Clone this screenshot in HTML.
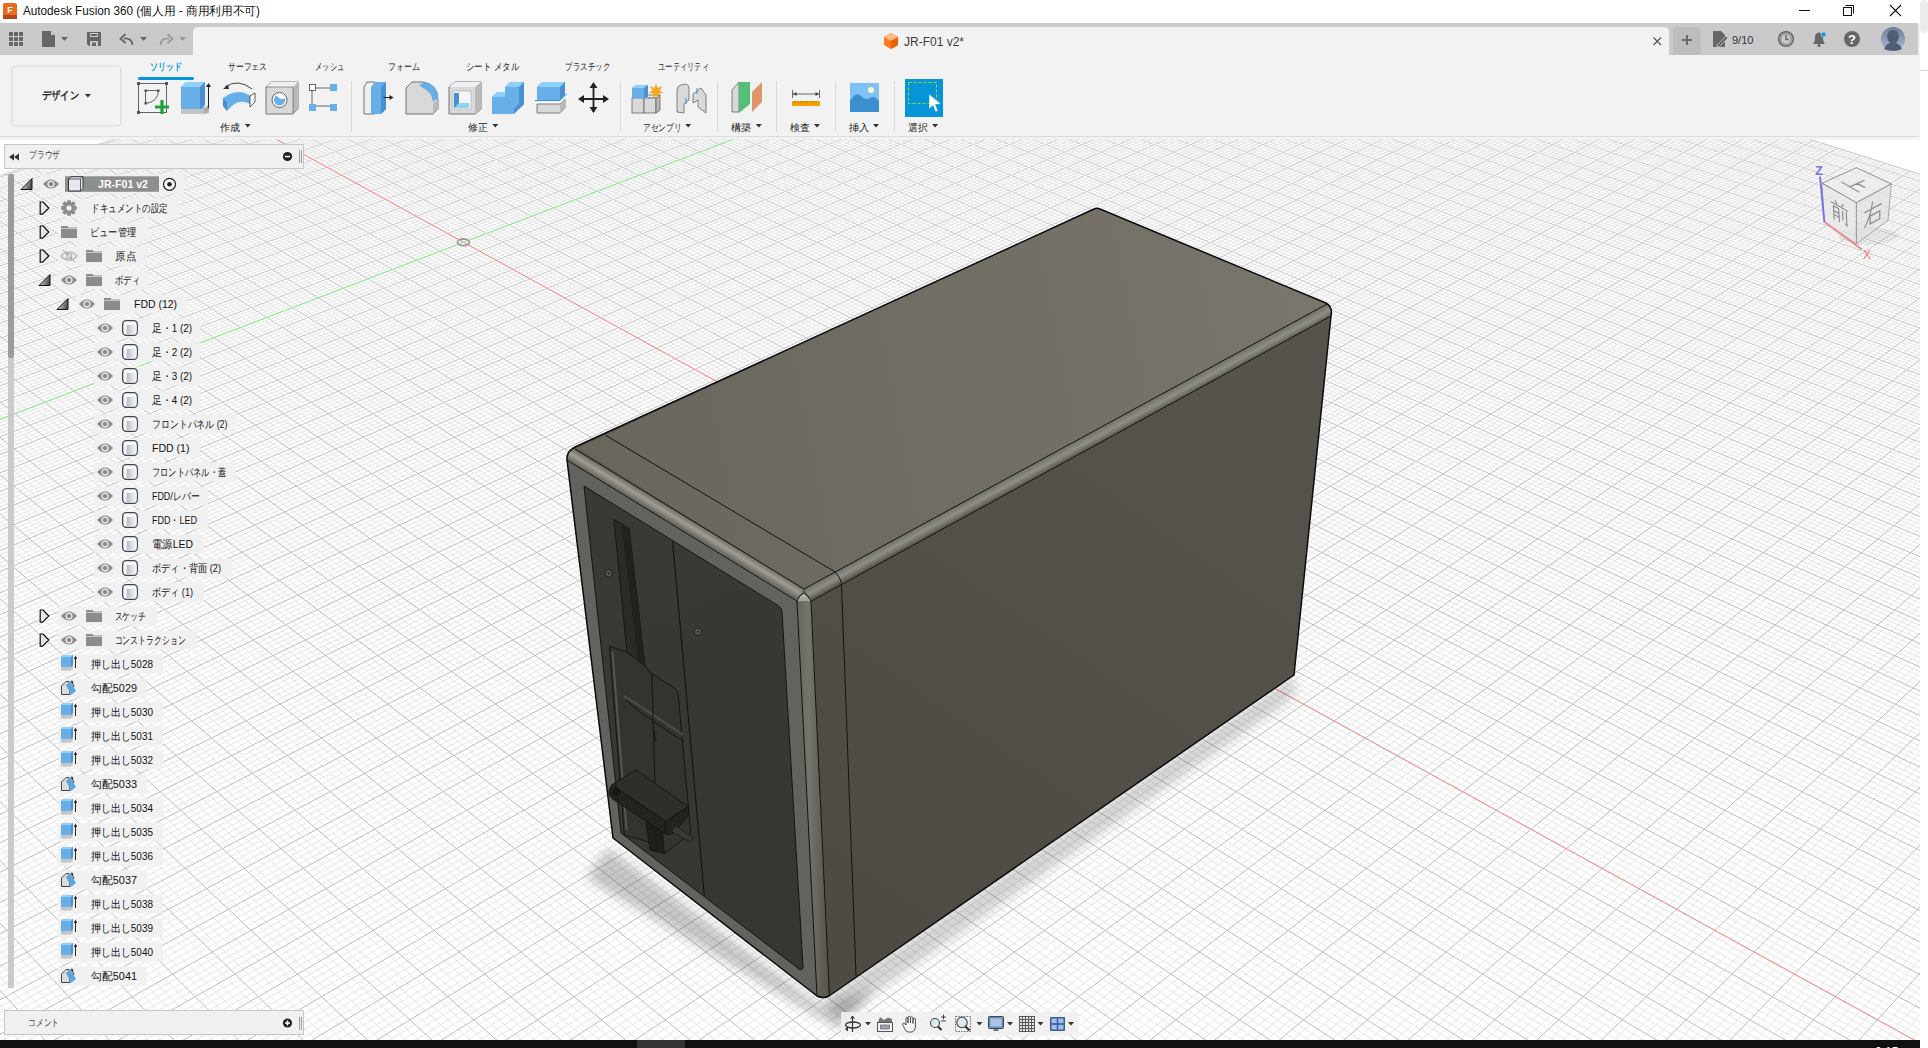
<!DOCTYPE html>
<html><head><meta charset="utf-8"><style>
*{box-sizing:border-box}
html,body{margin:0;padding:0;width:1928px;height:1048px;overflow:hidden;background:#fff;font-family:"Liberation Sans",sans-serif;color:#222}
.a{position:absolute}
svg text{font-family:"Liberation Sans",sans-serif}
</style></head><body>
<svg class="a" style="left:0;top:0" width="1928" height="1048" viewBox="0 0 1928 1048">
<defs><clipPath id="vp"><rect x="0" y="137" width="1920" height="903"/></clipPath></defs>
<rect x="0" y="137" width="1920" height="903" fill="#fff"/>
<g clip-path="url(#vp)">
<g>
<path d="M-1403.0 619.2L779.8 9383.2M-1393.5 616.2L845.4 9383.2M-1384.0 613.2L911.1 9383.3M-1374.6 610.2L976.7 9383.4M-1355.8 604.3L1107.9 9383.5M-1346.5 601.3L1173.6 9383.6M-1337.2 598.4L1239.2 9383.7M-1327.9 595.5L1304.8 9383.8M-1309.5 589.6L1436.1 9383.9M-1300.4 586.7L1501.7 9384.0M-1291.2 583.9L1567.3 9384.1M-1282.2 581.0L1632.9 9384.1M-1264.1 575.3L1764.2 9384.3M-1255.1 572.4L1829.8 9384.4M-1246.1 569.6L1895.4 9384.4M-1237.2 566.8L1961.1 9384.5M-1219.4 561.1L2092.3 9384.7M-1210.6 558.4L2157.9 9384.7M-1201.8 555.6L2223.6 9384.8M-1193.0 552.8L2289.2 9384.9M-1175.6 547.3L2420.4 9385.0M-1166.9 544.5L2486.1 9385.1M-1158.3 541.8L2551.7 9385.2M-1149.7 539.1L2617.3 9385.3M-1132.5 533.7L2748.6 9385.4M-1124.0 531.0L2780.8 9310.4M-1115.5 528.3L2791.7 9190.2M-1107.0 525.6L2802.4 9072.8M-1090.2 520.3L2822.9 8845.9M-1081.8 517.6L2832.9 8736.3M-1073.5 515.0L2842.6 8629.0M-1065.2 512.3L2852.2 8524.1M-1048.6 507.1L2870.6 8321.0M-1040.4 504.5L2879.5 8222.7M-1032.2 501.9L2888.3 8126.4M-1024.0 499.3L2896.8 8032.1M-1007.7 494.2L2913.4 7849.3M-999.7 491.6L2921.5 7760.6M-991.6 489.1L2929.3 7673.7M-983.6 486.5L2937.1 7588.5M-967.6 481.5L2952.1 7423.0M-959.6 479.0L2959.4 7342.6M-951.7 476.4L2966.6 7263.8M-943.8 473.9L2973.6 7186.4M-928.1 469.0L2987.2 7035.9M-920.2 466.5L2993.9 6962.7M-912.5 464.0L3000.4 6890.8M-904.7 461.6L3006.8 6820.2M-889.2 456.7L3019.3 6682.8M-881.5 454.3L3025.4 6615.9M-873.9 451.8L3031.3 6550.1M-866.2 449.4L3037.2 6485.4M-851.0 444.6L3048.6 6359.4M-843.5 442.2L3054.2 6298.0M-835.9 439.8L3059.7 6237.6M-828.4 437.4L3065.1 6178.1M-813.5 432.7L3075.6 6062.2M-806.0 430.4L3080.8 6005.6M-798.6 428.0L3085.8 5949.9M-791.2 425.7L3090.8 5895.1M-776.5 421.0L3100.5 5788.0M-769.2 418.7L3105.3 5735.7M-761.9 416.4L3109.9 5684.2M-754.6 414.1L3114.5 5633.5M-740.2 409.5L3123.5 5534.3M-733.0 407.2L3127.9 5485.8M-725.8 405.0L3132.3 5438.1M-718.6 402.7L3136.6 5391.0M-704.4 398.2L3144.9 5298.9M-697.3 396.0L3149.0 5253.8M-690.2 393.7L3153.0 5209.4M-683.2 391.5L3157.0 5165.6M-669.2 387.1L3164.8 5079.9M-662.2 384.9L3168.6 5037.9M-655.3 382.7L3172.4 4996.5M-648.3 380.5L3176.1 4955.6M-634.5 376.1L3183.3 4875.5M-627.7 373.9L3186.9 4836.3M-620.8 371.8L3190.4 4797.6M-614.0 369.6L3193.9 4759.4M-600.4 365.3L3200.7 4684.5M-593.7 363.2L3204.0 4647.8M-586.9 361.1L3207.3 4611.5M-580.2 358.9L3210.6 4575.7M-566.9 354.7L3216.9 4505.5M-560.2 352.6L3220.1 4471.1M-553.6 350.5L3223.1 4437.0M-547.0 348.4L3226.2 4403.4M-533.8 344.2L3232.2 4337.4M-527.3 342.2L3235.1 4305.1M-520.7 340.1L3238.0 4273.1M-514.2 338.1L3240.9 4241.4M-501.3 334.0L3246.5 4179.3M-494.8 331.9L3249.3 4148.8M-488.4 329.9L3252.0 4118.7M-482.0 327.8L3254.7 4088.9M-469.2 323.8L3260.1 4030.3M-462.8 321.8L3262.7 4001.5M-456.5 319.8L3265.3 3973.1M-450.2 317.8L3267.8 3944.9M-437.6 313.8L3272.8 3889.6M-431.4 311.8L3275.3 3862.4M-425.1 309.9L3277.7 3835.5M-418.9 307.9L3280.2 3808.9M-406.5 304.0L3284.9 3756.6M-400.4 302.0L3287.2 3730.9M-394.2 300.1L3289.6 3705.4M-388.1 298.2L3291.8 3680.2M-375.9 294.3L3296.3 3630.6M-369.8 292.4L3298.6 3606.2M-363.8 290.5L3300.7 3582.1M-357.7 288.5L3302.9 3558.2M-345.7 284.7L3307.2 3511.1M-339.7 282.9L3309.3 3488.0M-333.8 281.0L3311.4 3465.1M-327.8 279.1L3313.4 3442.4M-316.0 275.3L3317.5 3397.7M-310.1 273.5L3319.5 3375.7M-304.2 271.6L3321.5 3353.9M-298.3 269.8L3323.4 3332.3M-286.7 266.1L3327.3 3289.8M-280.8 264.2L3329.2 3268.8M-275.1 262.4L3331.1 3248.1M-269.3 260.6L3332.9 3227.5M-257.8 256.9L3336.6 3187.0M-252.0 255.1L3338.4 3167.1M-246.3 253.3L3340.2 3147.3M-240.6 251.5L3342.0 3127.7M-229.3 247.9L3345.5 3089.1M-223.7 246.1L3347.2 3070.1M-218.0 244.4L3348.9 3051.2M-212.4 242.6L3350.6 3032.5M-201.2 239.0L3354.0 2995.6M-195.7 237.3L3355.6 2977.5M-190.1 235.5L3357.3 2959.4M-184.6 233.8L3358.9 2941.6M-173.6 230.3L3362.1 2906.4M-168.1 228.5L3363.7 2889.0M-162.6 226.8L3365.2 2871.8M-157.1 225.1L3366.8 2854.7M-146.3 221.7L3369.8 2821.0M-140.9 219.9L3371.3 2804.4M-135.5 218.2L3372.8 2787.9M-130.1 216.5L3374.3 2771.5M-119.4 213.1L3377.2 2739.3M-114.0 211.5L3378.7 2723.3M-108.7 209.8L3380.1 2707.5M-103.4 208.1L3381.5 2691.9M-92.8 204.8L3384.4 2661.0M-87.6 203.1L3385.7 2645.7M-82.3 201.4L3387.1 2630.6M-77.1 199.8L3388.5 2615.5M-66.7 196.5L3391.2 2585.9M-61.5 194.8L3392.5 2571.2M-56.3 193.2L3393.8 2556.7M-51.1 191.6L3395.1 2542.3M-40.9 188.3L3397.7 2513.8M-35.7 186.7L3399.0 2499.7M-30.6 185.1L3400.3 2485.8M-25.5 183.5L3401.5 2471.9M-15.4 180.3L3404.0 2444.6M-10.4 178.7L3405.2 2431.0M-5.3 177.1L3406.4 2417.6M-0.3 175.5L3407.7 2404.3M9.7 172.3L3410.0 2378.0M14.7 170.7L3411.2 2365.0M19.7 169.2L3412.4 2352.1M24.6 167.6L3413.6 2339.3M34.5 164.5L3415.9 2314.0M39.4 162.9L3417.0 2301.5M44.3 161.4L3418.1 2289.0M49.2 159.8L3419.2 2276.7M58.9 156.7L3421.4 2252.3M63.8 155.2L3422.5 2240.3M68.6 153.7L3423.6 2228.3M73.5 152.1L3424.7 2216.4M83.1 149.1L3426.8 2192.9M87.9 147.6L3427.9 2181.3M92.6 146.1L3428.9 2169.8M97.4 144.6L3430.0 2158.3M106.9 141.6L3432.0 2135.7M111.6 140.1L3433.1 2124.4M116.3 138.6L3434.1 2113.3M121.0 137.1L3435.1 2102.3M130.4 134.1L3437.1 2080.4M135.1 132.7L3438.0 2069.6M139.7 131.2L3439.0 2058.8M144.3 129.7L3440.0 2048.2M153.6 126.8L3441.9 2027.1M158.2 125.3L3442.8 2016.6M162.8 123.9L3443.8 2006.2M167.4 122.4L3444.7 1995.9M176.5 119.5L3446.6 1975.5M181.0 118.1L3447.5 1965.4M185.6 116.7L3448.4 1955.4M190.1 115.2L3449.3 1945.5M199.1 112.4L3451.1 1925.7M203.6 111.0L3452.0 1916.0M208.1 109.6L3452.9 1906.3M212.5 108.1L3453.7 1896.7M221.4 105.3L3455.5 1877.6M225.8 103.9L3456.3 1868.1M230.3 102.5L3457.2 1858.8M234.7 101.1L3458.0 1849.4M243.5 98.4L3459.7 1831.0M247.8 97.0L3460.5 1821.8M252.2 95.6L3461.3 1812.8M256.6 94.2L3462.2 1803.7M265.2 91.5L3463.8 1785.9M269.5 90.1L3464.6 1777.0M273.9 88.7L3465.4 1768.2M278.2 87.4L3466.2 1759.5M286.7 84.7L3467.8 1742.2M291.0 83.3L3468.5 1733.6M295.2 82.0L3469.3 1725.1M299.5 80.6L3470.1 1716.6M307.9 78.0L3471.6 1699.8M312.2 76.6L3472.4 1691.5M316.4 75.3L3473.1 1683.2M320.6 74.0L3473.8 1675.0M328.9 71.3L3475.3 1658.8M333.1 70.0L3476.1 1650.7M337.2 68.7L3476.8 1642.7M341.4 67.4L3477.5 1634.7M349.6 64.8L3478.9 1618.9M353.7 63.5L3479.7 1611.1M357.8 62.2L3480.4 1603.3M361.9 60.9L3481.1 1595.6M370.1 58.3L3482.5 1580.3M374.1 57.0L3483.1 1572.7M378.2 55.7L3483.8 1565.1M382.2 54.5L3484.5 1557.6M390.3 51.9L3485.9 1542.7M394.3 50.6L3486.5 1535.4M398.3 49.4L3487.2 1528.0M402.3 48.1L3487.9 1520.7M410.3 45.6L3489.2 1506.3M414.2 44.3L3489.8 1499.1M418.2 43.1L3490.5 1492.0M422.1 41.8L3491.1 1484.9M430.0 39.4L3492.4 1470.9M433.9 38.1L3493.0 1463.9M437.8 36.9L3493.6 1457.0M441.7 35.6L3494.3 1450.1M449.5 33.2L3495.5 1436.4M453.3 32.0L3496.1 1429.6M457.2 30.7L3496.7 1422.9M461.1 29.5L3497.3 1416.2M468.7 27.1L3498.5 1402.9M472.6 25.9L3499.1 1396.3M476.4 24.7L3499.7 1389.8M480.2 23.5L3500.3 1383.3M487.8 21.1L3501.5 1370.3M491.6 19.9L3502.1 1363.9M495.3 18.7L3502.7 1357.6M499.1 17.5L3503.2 1351.2M506.6 15.1L3504.4 1338.6M510.3 13.9L3505.0 1332.4M514.1 12.8L3505.5 1326.2M517.8 11.6L3506.1 1320.0M525.2 9.2L3507.2 1307.8M528.9 8.1L3507.7 1301.7M532.6 6.9L3508.3 1295.6M536.3 5.7L3508.8 1289.6M543.6 3.4L3509.9 1277.7M547.2 2.3L3510.5 1271.8M550.9 1.1L3511.0 1265.9M554.5 -0.0L3511.5 1260.0M561.8 -2.3L3512.6 1248.4M565.4 -3.5L3513.1 1242.6M569.0 -4.6L3513.6 1236.9M572.6 -5.8L3514.1 1231.2M579.7 -8.0L3515.2 1219.8M583.3 -9.1L3515.7 1214.2M586.9 -10.3L3516.2 1208.6M590.4 -11.4L3516.7 1203.1M597.5 -13.6L3517.7 1192.0M601.0 -14.8L3518.2 1186.5M604.5 -15.9L3518.7 1181.1M608.1 -17.0L3519.2 1175.6M615.1 -19.2L3520.2 1164.9M618.5 -20.3L3520.6 1159.5M622.0 -21.4L3521.1 1154.2M625.5 -22.5L3521.6 1148.9M632.4 -24.7L3522.6 1138.4M635.9 -25.8L3523.0 1133.2M639.3 -26.9L3523.5 1128.0M642.8 -28.0L3524.0 1122.8M649.6 -30.1L3524.9 1112.5M653.0 -31.2L3525.4 1107.4M656.4 -32.3L3525.8 1102.4M659.8 -33.4L3526.3 1097.3M666.6 -35.5L3527.2 1087.3M670.0 -36.6L3527.6 1082.3M673.3 -37.6L3528.1 1077.4M676.7 -38.7L3528.5 1072.5M683.4 -40.8L3529.4 1062.7M686.7 -41.9L3529.9 1057.8M690.0 -42.9L3530.3 1053.0M693.4 -44.0L3530.7 1048.2M700.0 -46.1L3531.6 1038.6M703.3 -47.1L3532.0 1033.9M706.6 -48.1L3532.5 1029.1M709.9 -49.2L3532.9 1024.4M716.4 -51.3L3533.8 1015.1M719.7 -52.3L3534.2 1010.5M722.9 -53.3L3534.6 1005.9M726.2 -54.4L3535.0 1001.3M732.7 -56.4L3535.8 992.1M735.9 -57.4L3536.2 987.6M739.1 -58.4L3536.7 983.1M742.3 -59.5L3537.1 978.6M748.8 -61.5L3537.9 969.7M752.0 -62.5L3538.3 965.3M755.1 -63.5L3538.7 960.9M758.3 -64.5L3539.1 956.5M764.7 -66.5L3539.9 947.7M767.8 -67.5L3540.3 943.4M771.0 -68.5L3540.6 939.1M774.1 -69.5L3541.0 934.8M780.4 -71.5L3541.8 926.3M783.5 -72.5L3542.2 922.0M786.6 -73.5L3542.6 917.8M789.8 -74.5L3543.0 913.6M796.0 -76.4L3543.7 905.3M799.1 -77.4L3544.1 901.1M802.2 -78.4L3544.5 897.0M805.2 -79.4L3544.8 892.9M811.4 -81.3L3545.6 884.7M814.4 -82.3L3546.0 880.7M817.5 -83.2L3546.3 876.6M820.5 -84.2L3546.7 872.6M826.6 -86.1L3547.4 864.6M829.6 -87.1L3547.8 860.7M832.7 -88.0L3548.1 856.7M835.7 -89.0L3548.5 852.8M841.7 -90.9L3549.2 845.0M844.7 -91.8L3549.5 841.1M847.7 -92.8L3549.9 837.2M850.7 -93.7L3550.2 833.3M856.6 -95.6L3550.9 825.7M859.6 -96.6L3551.3 821.9M862.6 -97.5L3551.6 818.1M865.5 -98.4L3552.0 814.3M871.4 -100.3L3552.7 806.8M874.3 -101.2L3553.0 803.1M877.3 -102.1L3553.3 799.4M880.2 -103.1L3553.7 795.7M886.0 -104.9L3554.3 788.3M888.9 -105.8L3554.7 784.7M891.8 -106.8L3555.0 781.0M894.7 -107.7L3555.3 777.4M900.5 -109.5L3556.0 770.2M903.4 -110.4L3556.3 766.6M906.2 -111.3L3556.6 763.1M909.1 -112.2L3557.0 759.5M914.8 -114.0L3557.6 752.5M917.7 -114.9L3557.9 749.0M920.5 -115.8L3558.2 745.5M923.4 -116.7L3558.5 742.0M929.0 -118.5L3559.2 735.1M931.8 -119.4L3559.5 731.6M934.6 -120.3L3559.8 728.2M937.4 -121.2L3560.1 724.8M943.0 -123.0L3560.7 718.0M945.8 -123.8L3561.0 714.6M948.6 -124.7L3561.3 711.3M951.4 -125.6L3561.6 707.9M956.9 -127.3L3562.2 701.3M959.7 -128.2L3562.5 698.0M962.5 -129.1L3562.8 694.7M-1411.3 627.3L967.1 -127.6M-1410.5 630.4L969.9 -126.7M-1409.8 633.4L972.7 -125.9M-1409.0 636.5L975.5 -125.0M-1407.5 642.7L981.0 -123.2M-1406.8 645.8L983.8 -122.3M-1406.0 648.9L986.6 -121.4M-1405.3 652.0L989.5 -120.5M-1403.7 658.3L995.1 -118.8M-1403.0 661.5L997.9 -117.9M-1402.2 664.7L1000.8 -117.0M-1401.4 667.9L1003.6 -116.1M-1399.9 674.3L1009.3 -114.3M-1399.1 677.5L1012.2 -113.4M-1398.3 680.7L1015.0 -112.4M-1397.5 684.0L1017.9 -111.5M-1395.9 690.5L1023.7 -109.7M-1395.1 693.8L1026.6 -108.8M-1394.3 697.1L1029.4 -107.9M-1393.5 700.4L1032.3 -107.0M-1391.9 707.1L1038.2 -105.1M-1391.1 710.5L1041.1 -104.2M-1390.3 713.8L1044.0 -103.3M-1389.4 717.2L1046.9 -102.3M-1387.8 724.0L1052.8 -100.5M-1387.0 727.4L1055.8 -99.5M-1386.1 730.9L1058.7 -98.6M-1385.3 734.3L1061.7 -97.7M-1383.6 741.3L1067.6 -95.8M-1382.8 744.7L1070.6 -94.8M-1381.9 748.2L1073.6 -93.9M-1381.0 751.8L1076.6 -93.0M-1379.3 758.8L1082.6 -91.0M-1378.5 762.4L1085.6 -90.1M-1377.6 766.0L1088.6 -89.1M-1376.7 769.6L1091.6 -88.2M-1375.0 776.8L1097.7 -86.3M-1374.1 780.4L1100.7 -85.3M-1373.2 784.1L1103.8 -84.3M-1372.3 787.7L1106.8 -83.4M-1370.5 795.1L1112.9 -81.4M-1369.6 798.8L1116.0 -80.5M-1368.7 802.5L1119.1 -79.5M-1367.8 806.3L1122.2 -78.5M-1366.0 813.8L1128.4 -76.5M-1365.1 817.6L1131.5 -75.6M-1364.1 821.4L1134.6 -74.6M-1363.2 825.2L1137.7 -73.6M-1361.4 832.9L1144.0 -71.6M-1360.4 836.7L1147.1 -70.6M-1359.5 840.6L1150.3 -69.6M-1358.5 844.5L1153.4 -68.6M-1356.6 852.4L1159.7 -66.6M-1355.7 856.3L1162.9 -65.6M-1354.7 860.3L1166.1 -64.6M-1353.7 864.3L1169.3 -63.6M-1351.8 872.3L1175.7 -61.6M-1350.8 876.3L1178.9 -60.5M-1349.8 880.4L1182.1 -59.5M-1348.8 884.4L1185.3 -58.5M-1346.9 892.6L1191.8 -56.5M-1345.9 896.7L1195.0 -55.4M-1344.9 900.9L1198.3 -54.4M-1343.8 905.0L1201.5 -53.4M-1341.8 913.4L1208.0 -51.3M-1340.8 917.6L1211.3 -50.3M-1339.8 921.8L1214.6 -49.2M-1338.7 926.1L1217.9 -48.2M-1336.7 934.6L1224.5 -46.1M-1335.6 938.9L1227.8 -45.0M-1334.6 943.3L1231.1 -44.0M-1333.5 947.6L1234.5 -42.9M-1331.4 956.3L1241.1 -40.8M-1330.3 960.7L1244.5 -39.8M-1329.2 965.2L1247.8 -38.7M-1328.2 969.6L1251.2 -37.6M-1326.0 978.6L1258.0 -35.5M-1324.9 983.1L1261.3 -34.4M-1323.8 987.6L1264.7 -33.3M-1322.7 992.1L1268.1 -32.3M-1320.5 1001.3L1275.0 -30.1M-1319.4 1005.9L1278.4 -29.0M-1318.2 1010.5L1281.8 -27.9M-1317.1 1015.2L1285.3 -26.8M-1314.8 1024.5L1292.2 -24.7M-1313.7 1029.2L1295.6 -23.6M-1312.5 1034.0L1299.1 -22.5M-1311.4 1038.7L1302.6 -21.4M-1309.1 1048.3L1309.5 -19.1M-1307.9 1053.1L1313.0 -18.0M-1306.7 1058.0L1316.6 -16.9M-1305.5 1062.8L1320.1 -15.8M-1303.2 1072.7L1327.1 -13.6M-1302.0 1077.6L1330.7 -12.5M-1300.7 1082.6L1334.2 -11.3M-1299.5 1087.5L1337.8 -10.2M-1297.1 1097.6L1344.9 -7.9M-1295.9 1102.6L1348.5 -6.8M-1294.6 1107.7L1352.1 -5.7M-1293.4 1112.8L1355.7 -4.5M-1290.9 1123.1L1362.9 -2.2M-1289.6 1128.3L1366.5 -1.1M-1288.4 1133.5L1370.1 0.1M-1287.1 1138.8L1373.8 1.2M-1284.5 1149.3L1381.1 3.5M-1283.3 1154.6L1384.8 4.7M-1282.0 1159.9L1388.4 5.8M-1280.7 1165.3L1392.1 7.0M-1278.0 1176.1L1399.5 9.4M-1276.7 1181.6L1403.2 10.5M-1275.4 1187.0L1406.9 11.7M-1274.1 1192.5L1410.6 12.9M-1271.4 1203.6L1418.1 15.2M-1270.0 1209.2L1421.9 16.4M-1268.6 1214.8L1425.6 17.6M-1267.3 1220.4L1429.4 18.8M-1264.5 1231.8L1436.9 21.2M-1263.1 1237.5L1440.7 22.4M-1261.7 1243.3L1444.5 23.6M-1260.3 1249.1L1448.4 24.8M-1257.5 1260.7L1456.0 27.3M-1256.1 1266.6L1459.8 28.5M-1254.6 1272.5L1463.7 29.7M-1253.2 1278.4L1467.5 30.9M-1250.3 1290.4L1475.3 33.4M-1248.8 1296.4L1479.2 34.6M-1247.4 1302.5L1483.1 35.8M-1245.9 1308.6L1487.0 37.1M-1242.9 1320.9L1494.8 39.5M-1241.4 1327.1L1498.7 40.8M-1239.9 1333.3L1502.7 42.0M-1238.4 1339.6L1506.6 43.3M-1235.3 1352.2L1514.5 45.8M-1233.8 1358.5L1518.5 47.1M-1232.2 1364.9L1522.5 48.3M-1230.6 1371.3L1526.5 49.6M-1227.5 1384.3L1534.5 52.1M-1225.9 1390.8L1538.5 53.4M-1224.3 1397.4L1542.6 54.7M-1222.7 1404.0L1546.6 56.0M-1219.5 1417.3L1554.7 58.5M-1217.9 1424.1L1558.8 59.8M-1216.2 1430.8L1562.9 61.1M-1214.6 1437.6L1567.0 62.4M-1211.2 1451.3L1575.2 65.0M-1209.6 1458.2L1579.3 66.3M-1207.9 1465.1L1583.5 67.6M-1206.2 1472.1L1587.6 68.9M-1202.8 1486.2L1595.9 71.6M-1201.0 1493.3L1600.1 72.9M-1199.3 1500.5L1604.3 74.2M-1197.6 1507.6L1608.5 75.6M-1194.0 1522.1L1616.9 78.2M-1192.3 1529.4L1621.1 79.6M-1190.5 1536.8L1625.4 80.9M-1188.7 1544.2L1629.6 82.2M-1185.1 1559.1L1638.1 84.9M-1183.2 1566.6L1642.4 86.3M-1181.4 1574.2L1646.7 87.7M-1179.6 1581.8L1651.0 89.0M-1175.8 1597.2L1659.6 91.8M-1173.9 1604.9L1664.0 93.1M-1172.0 1612.7L1668.3 94.5M-1170.1 1620.6L1672.7 95.9M-1166.3 1636.4L1681.4 98.7M-1164.4 1644.4L1685.8 100.0M-1162.4 1652.4L1690.2 101.4M-1160.5 1660.5L1694.6 102.8M-1156.5 1676.8L1703.4 105.6M-1154.5 1685.1L1707.9 107.0M-1152.5 1693.3L1712.3 108.5M-1150.5 1701.7L1716.8 109.9M-1146.4 1718.5L1725.8 112.7M-1144.3 1727.0L1730.3 114.1M-1142.2 1735.5L1734.8 115.6M-1140.2 1744.1L1739.3 117.0M-1135.9 1761.5L1748.4 119.9M-1133.8 1770.2L1752.9 121.3M-1131.7 1779.1L1757.5 122.8M-1129.5 1787.9L1762.1 124.2M-1125.2 1805.9L1771.3 127.1M-1123.0 1814.9L1775.9 128.6M-1120.8 1824.0L1780.5 130.1M-1118.5 1833.2L1785.2 131.5M-1114.0 1851.7L1794.5 134.5M-1111.8 1861.0L1799.2 136.0M-1109.5 1870.4L1803.8 137.4M-1107.2 1879.9L1808.5 138.9M-1102.6 1899.0L1818.0 141.9M-1100.2 1908.7L1822.7 143.4M-1097.9 1918.4L1827.5 144.9M-1095.5 1928.2L1832.2 146.4M-1090.7 1947.9L1841.8 149.5M-1088.3 1957.9L1846.6 151.0M-1085.8 1968.0L1851.4 152.5M-1083.4 1978.1L1856.2 154.0M-1078.4 1998.5L1865.9 157.1M-1075.9 2008.9L1870.8 158.7M-1073.4 2019.3L1875.7 160.2M-1070.8 2029.7L1880.5 161.7M-1065.7 2050.9L1890.4 164.9M-1063.1 2061.6L1895.3 166.4M-1060.5 2072.3L1900.2 168.0M-1057.8 2083.2L1905.2 169.6M-1052.5 2105.1L1915.1 172.7M-1049.8 2116.2L1920.1 174.3M-1047.1 2127.3L1925.1 175.9M-1044.4 2138.6L1930.2 177.5M-1038.9 2161.3L1940.2 180.7M-1036.1 2172.8L1945.3 182.3M-1033.3 2184.3L1950.4 183.9M-1030.5 2196.0L1955.5 185.5M-1024.8 2219.5L1965.7 188.7M-1021.9 2231.4L1970.8 190.3M-1018.9 2243.4L1976.0 192.0M-1016.0 2255.5L1981.1 193.6M-1010.1 2280.0L1991.5 196.9M-1007.1 2292.3L1996.7 198.5M-1004.1 2304.8L2001.9 200.2M-1001.0 2317.3L2007.1 201.8M-994.9 2342.7L2017.6 205.2M-991.7 2355.5L2022.9 206.8M-988.6 2368.5L2028.2 208.5M-985.4 2381.5L2033.5 210.2M-979.0 2407.9L2044.1 213.6M-975.8 2421.2L2049.5 215.3M-972.5 2434.6L2054.9 217.0M-969.2 2448.2L2060.2 218.7M-962.6 2475.6L2071.0 222.1M-959.2 2489.5L2076.5 223.8M-955.8 2503.5L2081.9 225.5M-952.4 2517.6L2087.3 227.3M-945.5 2546.1L2098.3 230.7M-942.0 2560.6L2103.8 232.5M-938.4 2575.1L2109.3 234.2M-934.9 2589.8L2114.8 236.0M-927.7 2619.5L2125.9 239.5M-924.0 2634.6L2131.5 241.3M-920.3 2649.8L2137.1 243.0M-916.6 2665.1L2142.7 244.8M-909.1 2696.1L2154.0 248.4M-905.3 2711.7L2159.6 250.2M-901.4 2727.6L2165.3 252.0M-897.6 2743.5L2171.0 253.8M-889.7 2775.9L2182.4 257.4M-885.7 2792.2L2188.2 259.2M-881.7 2808.8L2193.9 261.0M-877.7 2825.4L2199.7 262.8M-869.5 2859.2L2211.3 266.5M-865.3 2876.3L2217.1 268.4M-861.1 2893.6L2222.9 270.2M-856.9 2911.0L2228.8 272.1M-848.3 2946.3L2240.6 275.8M-844.0 2964.2L2246.5 277.7M-839.6 2982.2L2252.4 279.5M-835.2 3000.4L2258.3 281.4M-826.2 3037.4L2270.3 285.2M-821.7 3056.1L2276.3 287.1M-817.1 3075.0L2282.3 289.0M-812.5 3094.1L2288.3 290.9M-803.1 3132.8L2300.4 294.8M-798.3 3152.4L2306.5 296.7M-793.5 3172.2L2312.6 298.6M-788.6 3192.2L2318.7 300.6M-778.8 3232.8L2331.0 304.4M-773.8 3253.4L2337.2 306.4M-768.7 3274.1L2343.4 308.4M-763.7 3295.1L2349.6 310.3M-753.3 3337.7L2362.1 314.3M-748.1 3359.4L2368.3 316.3M-742.8 3381.2L2374.6 318.3M-737.4 3403.2L2380.9 320.3M-726.5 3448.0L2393.6 324.3M-721.0 3470.8L2399.9 326.3M-715.4 3493.7L2406.3 328.3M-709.8 3516.9L2412.7 330.3M-698.4 3564.1L2425.6 334.4M-692.6 3588.0L2432.0 336.5M-686.7 3612.2L2438.5 338.5M-680.8 3636.6L2445.0 340.6M-668.7 3686.3L2458.1 344.7M-662.6 3711.5L2464.6 346.8M-656.4 3737.0L2471.2 348.9M-650.1 3762.8L2477.8 351.0M-637.4 3815.2L2491.1 355.2M-630.9 3841.9L2497.7 357.3M-624.4 3868.8L2504.4 359.4M-617.8 3896.1L2511.1 361.5M-604.3 3951.5L2524.6 365.8M-597.5 3979.7L2531.3 367.9M-590.6 4008.2L2538.1 370.1M-583.6 4037.0L2544.9 372.2M-569.3 4095.7L2558.6 376.6M-562.1 4125.5L2565.5 378.7M-554.8 4155.7L2572.4 380.9M-547.3 4186.2L2579.3 383.1M-532.2 4248.5L2593.2 387.5M-524.5 4280.1L2600.2 389.7M-516.8 4312.2L2607.2 391.9M-508.9 4344.6L2614.2 394.2M-492.9 4410.7L2628.3 398.6M-484.7 4444.3L2635.4 400.9M-476.4 4478.4L2642.5 403.1M-468.0 4512.9L2649.7 405.4M-451.0 4583.3L2664.0 409.9M-442.3 4619.1L2671.2 412.2M-433.5 4655.4L2678.5 414.5M-424.5 4692.2L2685.7 416.8M-406.3 4767.2L2700.3 421.4M-397.0 4805.4L2707.6 423.8M-387.6 4844.2L2715.0 426.1M-378.1 4883.5L2722.3 428.4M-358.6 4963.6L2737.2 433.1M-348.7 5004.5L2744.6 435.5M-338.6 5046.0L2752.1 437.8M-328.4 5088.0L2759.6 440.2M-307.6 5173.9L2774.6 445.0M-296.9 5217.7L2782.2 447.4M-286.1 5262.2L2789.8 449.8M-275.2 5307.3L2797.4 452.2M-252.8 5399.5L2812.7 457.1M-241.4 5446.6L2820.4 459.5M-229.8 5494.5L2828.1 461.9M-218.0 5543.0L2835.9 464.4M-193.9 5642.3L2851.5 469.3M-181.6 5693.0L2859.3 471.8M-169.1 5744.6L2867.1 474.3M-156.4 5796.9L2875.0 476.8M-130.3 5904.1L2890.8 481.8M-117.0 5959.0L2898.8 484.3M-103.5 6014.7L2906.8 486.9M-89.7 6071.3L2914.8 489.4M-61.6 6187.4L2930.9 494.5M-47.1 6246.9L2939.0 497.1M-32.4 6307.4L2947.1 499.6M-17.5 6368.8L2955.3 502.2M13.1 6494.9L2971.7 507.4M28.8 6559.6L2979.9 510.0M44.8 6625.5L2988.2 512.6M61.0 6692.4L2996.5 515.3M94.4 6830.0L3013.1 520.5M111.6 6900.6L3021.5 523.2M129.0 6972.5L3029.9 525.9M146.8 7045.7L3038.3 528.5M183.3 7196.3L3055.3 533.9M202.1 7273.7L3063.8 536.6M221.3 7352.6L3072.4 539.3M240.8 7433.0L3081.0 542.0M281.0 7598.5L3098.2 547.5M301.7 7683.8L3106.9 550.3M322.8 7770.7L3115.6 553.0M344.3 7859.4L3124.4 555.8M388.7 8042.3L3141.9 561.3M411.6 8136.6L3150.8 564.1M435.0 8232.8L3159.6 566.9M458.8 8331.2L3168.5 569.8M508.1 8534.2L3186.4 575.4M533.6 8639.1L3195.4 578.3M559.6 8746.4L3204.4 581.1M586.2 8856.0L3213.5 584.0M641.3 9082.8L3231.7 589.8M669.8 9200.2L3240.8 592.7M698.9 9320.3L3250.0 595.6M746.0 9383.1L3259.3 598.5M876.8 9383.3L3277.8 604.4M942.3 9383.3L3287.1 607.3M1007.7 9383.4L3296.5 610.3M1073.1 9383.5L3305.9 613.3M1203.9 9383.6L3324.8 619.3M1269.4 9383.7L3334.3 622.3M1334.8 9383.8L3343.8 625.3M1400.2 9383.9L3353.4 628.3M1531.0 9384.0L3372.6 634.4M1596.4 9384.1L3382.3 637.5M1661.9 9384.2L3392.0 640.6M1727.3 9384.2L3401.7 643.7M1858.1 9384.4L3421.3 649.9M1923.5 9384.5L3431.2 653.0M1989.0 9384.5L3441.1 656.1M2054.4 9384.6L3451.0 659.3M2185.2 9384.8L3471.0 665.6M2250.6 9384.8L3481.1 668.8M2316.0 9384.9L3491.1 672.0M2381.5 9385.0L3501.3 675.2M2512.3 9385.1L3521.6 681.6M2577.7 9385.2L3531.9 684.9M2643.1 9385.3L3542.2 688.1M2708.6 9385.4L3552.5 691.4" stroke="#e5e5e5" stroke-width="1" fill="none"/>
<defs><linearGradient id="mfade" x1="0" y1="137" x2="0" y2="560" gradientUnits="userSpaceOnUse"><stop offset="0" stop-color="#fff" stop-opacity="0.72"/><stop offset="1" stop-color="#fff" stop-opacity="1"/></linearGradient><mask id="mmask" maskUnits="userSpaceOnUse" x="0" y="137" width="1920" height="903"><rect x="0" y="137" width="1920" height="903" fill="url(#mfade)"/></mask></defs>
<path d="M-1412.5 622.2L714.2 9383.1M-1365.2 607.3L1042.3 9383.5M-1318.7 592.6L1370.4 9383.8M-1273.1 578.1L1698.6 9384.2M-1228.3 564.0L2026.7 9384.6M-1184.3 550.0L2354.8 9385.0M-1141.1 536.4L2682.9 9385.3M-1098.6 522.9L2812.8 8958.1M-1056.9 509.7L2861.5 8421.5M-1015.9 496.7L2905.2 7939.8M-975.6 484.0L2944.7 7504.9M-935.9 471.5L2980.5 7110.4M-896.9 459.1L3013.1 6750.9M-858.6 447.0L3043.0 6421.9M-820.9 435.1L3070.4 6119.7M-783.9 423.4L3095.7 5841.1M-747.4 411.8L3119.1 5583.5M-711.5 400.5L3140.8 5344.6M-676.2 389.3L3160.9 5122.4M-641.4 378.3L3179.7 4915.3M-607.2 367.5L3197.3 4721.7M-573.5 356.8L3213.8 4540.4M-540.4 346.3L3229.2 4370.2M-507.7 336.0L3243.7 4210.2M-475.6 325.8L3257.4 4059.4M-443.9 315.8L3270.3 3917.1M-412.7 305.9L3282.5 3782.6M-382.0 296.2L3294.1 3655.3M-351.7 286.6L3305.1 3534.5M-321.9 277.2L3315.5 3419.9M-292.5 267.9L3325.4 3310.9M-263.5 258.7L3334.8 3207.2M-235.0 249.7L3343.7 3108.3M-206.8 240.8L3352.3 3014.0M-179.1 232.0L3360.5 2923.9M-151.7 223.4L3368.3 2837.8M-124.7 214.8L3375.8 2755.3M-98.1 206.4L3383.0 2676.4M-71.9 198.1L3389.8 2600.6M-46.0 189.9L3396.4 2528.0M-20.5 181.9L3402.8 2458.2M4.7 173.9L3408.9 2391.1M29.6 166.0L3414.7 2326.6M54.1 158.3L3420.3 2264.5M78.3 150.6L3425.8 2204.6M102.1 143.1L3431.0 2146.9M125.7 135.6L3436.1 2091.3M149.0 128.3L3440.9 2037.6M171.9 121.0L3445.6 1985.7M194.6 113.8L3450.2 1935.6M217.0 106.7L3454.6 1887.1M239.1 99.7L3458.9 1840.2M260.9 92.8L3463.0 1794.8M282.4 86.0L3467.0 1750.8M303.7 79.3L3470.8 1708.2M324.7 72.6L3474.6 1666.9M345.5 66.1L3478.2 1626.8M366.0 59.6L3481.8 1587.9M386.3 53.2L3485.2 1550.2M406.3 46.9L3488.5 1513.5M426.1 40.6L3491.7 1477.9M445.6 34.4L3494.9 1443.2M464.9 28.3L3497.9 1409.6M484.0 22.3L3500.9 1376.8M502.9 16.3L3503.8 1344.9M521.5 10.4L3506.6 1313.9M539.9 4.6L3509.4 1283.6M558.1 -1.2L3512.0 1254.2M576.2 -6.9L3514.7 1225.5M594.0 -12.5L3517.2 1197.5M611.6 -18.1L3519.7 1170.2M629.0 -23.6L3522.1 1143.6M646.2 -29.0L3524.4 1117.6M663.2 -34.4L3526.7 1092.3M680.0 -39.7L3529.0 1067.6M696.7 -45.0L3531.2 1043.4M713.2 -50.2L3533.3 1019.8M729.4 -55.4L3535.4 996.7M745.6 -60.5L3537.5 974.1M761.5 -65.5L3539.5 952.1M777.3 -70.5L3541.4 930.5M792.9 -75.4L3543.3 909.4M808.3 -80.3L3545.2 888.8M823.6 -85.2L3547.0 868.6M838.7 -89.9L3548.8 848.9M853.7 -94.7L3550.6 829.5M868.5 -99.4L3552.3 810.6M883.1 -104.0L3554.0 792.0M897.6 -108.6L3555.7 773.8M912.0 -113.1L3557.3 756.0M926.2 -117.6L3558.9 738.5M940.2 -122.1L3560.4 721.4M954.2 -126.5L3561.9 704.6M-1412.0 624.3L964.3 -128.5M-1408.3 639.6L978.2 -124.1M-1404.5 655.2L992.3 -119.7M-1400.6 671.1L1006.5 -115.2M-1396.7 687.3L1020.8 -110.6M-1392.7 703.8L1035.3 -106.0M-1388.6 720.6L1049.9 -101.4M-1384.4 737.8L1064.6 -96.7M-1380.2 755.3L1079.6 -92.0M-1375.9 773.2L1094.6 -87.2M-1371.4 791.4L1109.9 -82.4M-1366.9 810.0L1125.3 -77.5M-1362.3 829.0L1140.8 -72.6M-1357.6 848.4L1156.6 -67.6M-1352.8 868.3L1172.5 -62.6M-1347.9 888.5L1188.5 -57.5M-1342.8 909.2L1204.8 -52.3M-1337.7 930.3L1221.2 -47.1M-1332.4 952.0L1237.8 -41.9M-1327.1 974.1L1254.6 -36.6M-1321.6 996.7L1271.5 -31.2M-1316.0 1019.8L1288.7 -25.7M-1310.2 1043.5L1306.0 -20.3M-1304.3 1067.7L1323.6 -14.7M-1298.3 1092.6L1341.3 -9.1M-1292.2 1118.0L1359.3 -3.4M-1285.8 1144.0L1377.4 2.4M-1279.4 1170.7L1395.8 8.2M-1272.7 1198.1L1414.4 14.1M-1265.9 1226.1L1433.2 20.0M-1258.9 1254.9L1452.2 26.0M-1251.7 1284.4L1471.4 32.1M-1244.4 1314.7L1490.9 38.3M-1236.8 1345.8L1510.6 44.5M-1229.1 1377.8L1530.5 50.9M-1221.1 1410.7L1550.7 57.2M-1212.9 1444.4L1571.1 63.7M-1204.5 1479.1L1591.8 70.3M-1195.8 1514.9L1612.7 76.9M-1186.9 1551.6L1633.9 83.6M-1177.7 1589.5L1655.3 90.4M-1168.2 1628.5L1677.0 97.3M-1158.5 1668.6L1699.0 104.2M-1148.4 1710.1L1721.3 111.3M-1138.1 1752.8L1743.8 118.4M-1127.4 1796.9L1766.7 125.7M-1116.3 1842.4L1789.8 133.0M-1104.9 1889.4L1813.3 140.4M-1093.1 1938.0L1837.0 148.0M-1080.9 1988.3L1861.1 155.6M-1068.3 2040.3L1885.4 163.3M-1055.2 2094.1L1910.1 171.1M-1041.7 2149.9L1935.2 179.1M-1027.6 2207.7L1960.6 187.1M-1013.1 2267.7L1986.3 195.2M-997.9 2329.9L2012.4 203.5M-982.2 2394.6L2038.8 211.9M-965.9 2461.8L2065.6 220.4M-949.0 2531.8L2092.8 229.0M-931.3 2604.6L2120.4 237.7M-912.9 2680.5L2148.3 246.6M-893.6 2759.6L2176.7 255.6M-873.6 2842.2L2205.5 264.7M-852.6 2928.6L2234.7 273.9M-830.7 3018.8L2264.3 283.3M-807.8 3113.3L2294.3 292.8M-783.7 3212.4L2324.8 302.5M-758.5 3316.3L2355.8 312.3M-732.0 3425.5L2387.2 322.3M-704.1 3540.4L2419.1 332.4M-674.8 3661.3L2451.5 342.6M-643.8 3788.9L2484.4 353.1M-611.1 3923.6L2517.8 363.6M-576.5 4066.2L2551.8 374.4M-539.8 4217.2L2586.2 385.3M-500.9 4377.4L2621.2 396.4M-459.6 4547.9L2656.8 407.7M-415.5 4729.4L2693.0 419.1M-368.4 4923.3L2729.7 430.8M-318.1 5130.7L2767.1 442.6M-264.1 5353.1L2805.1 454.6M-206.0 5592.2L2843.7 466.9M-143.4 5850.1L2882.9 479.3M-75.8 6128.9L2922.8 491.9M-2.3 6431.4L2963.5 504.8M77.6 6760.6L3004.8 517.9M164.9 7120.3L3046.8 531.2M260.7 7514.9L3089.6 544.8M366.3 7949.9L3133.1 558.6M483.2 8431.6L3177.4 572.6M613.4 8968.1L3222.6 586.9M811.4 9383.2L3268.5 601.4M1138.5 9383.6L3315.3 616.3M1465.6 9383.9L3363.0 631.4M1792.7 9384.3L3411.5 646.8M2119.8 9384.7L3461.0 662.4M2446.9 9385.1L3511.4 678.4M2774.0 9385.4L3562.8 694.7M-28998.3 9349.0L962.5 -129.1M962.5 -129.1L31098.9 9418.0" stroke="#bdbdbd" stroke-width="1" fill="none" mask="url(#mmask)"/>
<path d="M217.0 106.7L17120.6 9401.9" stroke="#ff8a8a" stroke-width="1" fill="none"/>
<path d="M-23393.3 9355.4L1221.2 -47.1" stroke="#86f086" stroke-width="1" fill="none"/>
</g>
<ellipse cx="463.5" cy="242.3" rx="6" ry="3.3" fill="none" stroke="#9a9a9a" stroke-width="1.8"/>
<defs>
<filter id="blur8" x="-20%" y="-20%" width="140%" height="140%"><feGaussianBlur stdDeviation="9"/></filter>
<filter id="blur6" x="-20%" y="-20%" width="140%" height="140%"><feGaussianBlur stdDeviation="6"/></filter>
<filter id="blur3" x="-20%" y="-20%" width="140%" height="140%"><feGaussianBlur stdDeviation="4"/></filter>
<linearGradient id="topg" x1="574" y1="450" x2="1327" y2="304" gradientUnits="userSpaceOnUse"><stop offset="0" stop-color="#6a665d"/><stop offset="0.6" stop-color="#736f66"/><stop offset="1" stop-color="#7a766d"/></linearGradient>
<linearGradient id="rightg" x1="900" y1="900" x2="1250" y2="400" gradientUnits="userSpaceOnUse"><stop offset="0" stop-color="#4e4b45"/><stop offset="1" stop-color="#57534c"/></linearGradient>
<linearGradient id="filA" x1="690" y1="519.3" x2="683.8" y2="529.5" gradientUnits="userSpaceOnUse"><stop offset="0" stop-color="#6e6a61"/><stop offset="0.5" stop-color="#a09d93"/><stop offset="0.7" stop-color="#8d8a81"/><stop offset="1" stop-color="#6c6a64"/></linearGradient><linearGradient id="filR" x1="1000" y1="482.2" x2="1006.2" y2="493.6" gradientUnits="userSpaceOnUse"><stop offset="0" stop-color="#736f66"/><stop offset="0.5" stop-color="#8e8e88"/><stop offset="0.72" stop-color="#7a7870"/><stop offset="1" stop-color="#5a574f"/></linearGradient>
<linearGradient id="filV" x1="0" y1="0" x2="1" y2="0"><stop offset="0" stop-color="#66665f"/><stop offset="0.35" stop-color="#74736c"/><stop offset="1" stop-color="#55524b"/></linearGradient>
<linearGradient id="panelg" x1="584" y1="486" x2="803" y2="970" gradientUnits="userSpaceOnUse"><stop offset="0" stop-color="#3a3935"/><stop offset="1" stop-color="#363531"/></linearGradient>
</defs>
<polygon points="608,848 821,1006 872,990 840,1030 586,878" fill="#000" opacity="0.22" filter="url(#blur6)"/>
<polygon points="823,997 1294,675 1296,690 1290,700 840,1018" fill="#000" opacity="0.17" filter="url(#blur6)"/>
<path d="M567,460 Q566,452 575,447 L1094,209 Q1097,207.5 1100,209 L1326,303 Q1333,307 1331,316 L1294,675 L829,996 Q823,999 817,996 L613,838 Z" fill="#5e5b55"/>
<polygon points="811,601 1330,316 1294,675 829,995" fill="url(#rightg)"/>
<path d="M578,448 L1094,209 Q1097,207.5 1100,209 L1326,303 Q1331,306 1328,313 L804,589 Z" fill="url(#topg)"/>
<polygon points="804,589 1327,304 1331,310 1330,316 811.5,601" fill="url(#filR)"/>
<polygon points="567,460 797,601 817,996 613,838" fill="#63635d"/>
<path d="M569,452 Q571,448 575,449 L804,589 L797,601 L567,460 Z" fill="url(#filA)"/>
<polygon points="797,601 811,601 829.4,995 817,996" fill="url(#filV)"/>
<path d="M797,601 Q803,587 811,601 Z" fill="#a8a59c"/><circle cx="804" cy="595" r="2" fill="#d0cec6" opacity="0.6"/>
<path d="M584,486 L778,605.5 Q782,608 782,612 L803,967 Q803,971 799,969 L621,833 Z" fill="url(#panelg)"/>
<polygon points="613.9,519.5 629.2,528.6 645,666 627,653" fill="#2b2a27" stroke="#141412" stroke-width="0.9"/>
<polygon points="621.5,524 629.2,528.6 645,666 638,661" fill="#22211e"/>
<path d="M609.5,646.3 L626.6,652 L645,666 L651.8,673.8 L673.6,687.6 Q678,690 678.2,694.4 L690.8,833 L664.4,853.6 L646,841 L624.3,835.3 Z" fill="#34332f" stroke="#141412" stroke-width="1"/>
<path d="M612.5,652 L626.5,830" stroke="#55544e" stroke-width="2" fill="none"/>
<path d="M626,700 L640,712 L684,742" stroke="#141412" stroke-width="1" fill="none"/>
<path d="M624,696 L640,706 L683,735" stroke="#4a4944" stroke-width="2.5" fill="none"/>
<path d="M651.8,673.8 L656,820 M654,730 L656,742" stroke="#141412" stroke-width="1" fill="none"/>
<path d="M646,821.5 L650,850 L664.4,853.6 L662,826" fill="#1f1e1b" stroke="#141412" stroke-width="0.8"/>
<path d="M611.8,784.9 L635.8,770 L688.5,806.6 L665.6,821.5 Z" fill="#2f2e2b" stroke="#141412" stroke-width="0.9"/>
<path d="M611.8,784.9 Q606,792 612,798.6 L665.6,834 Q672,836 676,830 L688.5,815 L688.5,806.6 L665.6,821.5 Z" fill="#242320" stroke="#141412" stroke-width="0.9"/>
<circle cx="616.3" cy="792" r="3.3" fill="#1c1b19" stroke="#0e0e0d" stroke-width="0.9"/>
<path d="M665.6,821.5 L665.6,834" stroke="#141412" stroke-width="0.9"/>
<path d="M676,826 L694,838 L690,842 L672,832" fill="#3a3935" stroke="#141412" stroke-width="0.7"/>
<path d="M672.7,542.4 L704.3,895.2" stroke="#141412" stroke-width="1.1"/>
<circle cx="608.6" cy="573.3" r="3.6" fill="#5a5954" stroke="#141412" stroke-width="0.8"/><circle cx="608.6" cy="573.3" r="1.2" fill="#2a2a27"/>
<circle cx="698" cy="631.7" r="3.6" fill="#5a5954" stroke="#141412" stroke-width="0.8"/><circle cx="698" cy="631.7" r="1.2" fill="#2a2a27"/>
<path d="M567,460 Q566,452 575,447 L1094,209 Q1097,207.5 1100,209 L1326,303 Q1333,307 1331,316 L1294,675 L829,996 Q823,999 817,996 L613,838 Z" stroke="#0c0c0c" stroke-width="1.5" fill="none" stroke-linejoin="round"/>
<path d="M575,449 L804,589 L1327,304" stroke="#141412" stroke-width="1" fill="none"/>
<path d="M567,460 L797,601 M811.5,601 L1331,316" stroke="#141412" stroke-width="1" fill="none"/>
<path d="M797,601 L817,996 M811,601 L829.4,995" stroke="#141412" stroke-width="1" fill="none"/>
<path d="M797,601 Q803,586 811,601" stroke="#141412" stroke-width="1" fill="none"/>
<path d="M605.7,435.3 L834.4,571.5 Q841,578 841.5,584 L856,976" stroke="#141412" stroke-width="1" fill="none"/>
<path d="M584,486 L778,605.5 Q782,608 782,612 L803,967 Q803,971 799,969 L621,833 Z" stroke="#141412" stroke-width="1" fill="none"/>
<ellipse cx="1868" cy="236" rx="30" ry="9" fill="#000" opacity="0.06"/>
<polygon points="1856.4,167.7 1891.3,183.8 1856.4,202.7 1822,183.2" fill="#ececec" fill-opacity="0.72" stroke="#777" stroke-width="0.8"/>
<polygon points="1822,183.2 1856.4,202.7 1856.4,243.9 1824.4,222.1" fill="#e6e6e6" fill-opacity="0.72" stroke="#888" stroke-width="0.7"/>
<polygon points="1856.4,202.7 1891.3,183.8 1888,220.4 1856.4,243.9" fill="#e0e0e0" fill-opacity="0.72" stroke="#888" stroke-width="0.7"/>
<path transform="matrix(1.01 0.574 -1.01 0.456 1856.5 184.35)" d="M-0.5 -8V6M-0.5 -1.5H6.5M-8.5 6H8.5" fill="none" stroke="#8a8a8a" stroke-width="1.25" stroke-linecap="round"/>
<path transform="matrix(0.95 0.54 0.066 1.08 1839.8 213)" d="M-4 -9.5L-2.8 -7.5M4 -9.5L2.8 -7.5M-8.5 -6H8.5M-6.5 -3.5H-1V8.5M-6.5 -3.5V8.5M-6.5 1H-1M-6.5 4.5H-1M3 -3V5M7 -4V8.5L5.5 7.5" fill="none" stroke="#8a8a8a" stroke-width="1.25" stroke-linecap="round"/>
<path transform="matrix(0.97 -0.525 0 1.14 1873 212.7)" d="M-8.5 -4H8.5M-0.5 -9.5Q-2 1 -8.5 9M-3 1.5H7V8.5H-3ZM-3 1.5V8.5" fill="none" stroke="#8a8a8a" stroke-width="1.25" stroke-linecap="round"/>
<path d="M1824.4 222.1L1820 176.5" stroke="#6f6ff2" stroke-width="1.8"/><path d="M1824.4 222.1L1862 249.6" stroke="#f08c8c" stroke-width="1.8"/>
<text x="1819" y="175" font-size="13" font-weight="bold" fill="#7474f4" text-anchor="middle">Z</text>
<text x="1867" y="259" font-size="12" fill="#f07878" text-anchor="middle">X</text>
</g>
<defs><linearGradient id="tg" x1="0" y1="0" x2="1" y2="0.3"><stop offset="0" stop-color="#fafafa"/><stop offset="1" stop-color="#555"/></linearGradient><linearGradient id="bg1" x1="0" y1="0" x2="1" y2="0"><stop offset="0" stop-color="#b9bec6"/><stop offset="0.6" stop-color="#dfe2e6"/><stop offset="1" stop-color="#f6f7f8"/></linearGradient></defs>
<rect x="4.5" y="144.5" width="299" height="24" fill="#f0f0f0" stroke="#c6c6c6"/>
<path d="M9 157L14 153.5V160.5Z M14 157L19 153.5V160.5Z" fill="#333"/>
<text x="29" y="157.5" font-size="10" fill="#444" textLength="31" lengthAdjust="spacingAndGlyphs">ブラウザ</text>
<circle cx="287.5" cy="156.5" r="4.6" fill="#222"/><rect x="285" y="155.8" width="5" height="1.5" fill="#fff"/>
<path d="M299.5 150V163M301.5 150V163" stroke="#777" stroke-width="0.7"/>
<rect x="8" y="174" width="6" height="814" fill="#cbcbcb"/><rect x="8" y="174" width="6" height="184" rx="2" fill="#9c9c9c"/>
<rect x="40" y="174.5" width="144" height="19" fill="#f0f0f0" opacity="0.93"/>
<path d="M21 189.5L32 178.5V189.5Z" fill="url(#tg)" stroke="#111" stroke-width="1" stroke-linejoin="round"/>
<path d="M43 184Q51 175 59 184Q51 193 43 184Z" fill="#8c8c8c"/><circle cx="51" cy="184" r="2.9" fill="none" stroke="#f0f0f0" stroke-width="1.3"/>
<rect x="65" y="176.3" width="94" height="15.5" fill="#8e8e8e"/>
<path d="M68.5 179L71 176.7H83V188.5L80.5 191H68.5Z" fill="#e6e8ec" stroke="#2c3440" stroke-width="1"/><path d="M80.5 179V191M68.5 179H80.5L83 176.7" fill="none" stroke="#2c3440" stroke-width="0.8"/>
<text x="98" y="188" font-size="10.5" fill="#fff" textLength="50" lengthAdjust="spacingAndGlyphs" font-weight="bold">JR-F01 v2</text>
<circle cx="169.5" cy="184.3" r="6" fill="#fafafa" stroke="#222" stroke-width="1.2"/><circle cx="169.5" cy="184.3" r="2.3" fill="#222"/>
<rect x="58" y="198.5" width="122" height="19" fill="#f0f0f0" opacity="0.93"/>
<path d="M40.2 202H43.1L48.8 208L42.6 214.2H40.2Z" fill="#e4e6ea" stroke="#111" stroke-width="1.2" stroke-linejoin="round"/>
<polygon points="76.81,206.25 76.81,209.75 74.18,210.13 74.17,210.16 75.76,212.29 73.29,214.76 71.16,213.17 71.13,213.18 70.75,215.81 67.25,215.81 66.87,213.18 66.84,213.17 64.71,214.76 62.24,212.29 63.83,210.16 63.82,210.13 61.19,209.75 61.19,206.25 63.82,205.87 63.83,205.84 62.24,203.71 64.71,201.24 66.84,202.83 66.87,202.82 67.25,200.19 70.75,200.19 71.13,202.82 71.16,202.83 73.29,201.24 75.76,203.71 74.17,205.84 74.18,205.87" fill="#8c8c8c"/><circle cx="69" cy="208" r="2.6" fill="#f0f0f0"/>
<text x="91" y="212" font-size="11" fill="#111" textLength="77" lengthAdjust="spacingAndGlyphs">ドキュメントの設定</text>
<rect x="58" y="222.5" width="89" height="19" fill="#f0f0f0" opacity="0.93"/>
<path d="M40.2 226H43.1L48.8 232L42.6 238.2H40.2Z" fill="#e4e6ea" stroke="#111" stroke-width="1.2" stroke-linejoin="round"/>
<path d="M61 226H68V227.5H77V238H61Z" fill="#8c8c8c"/><rect x="61" y="228" width="16" height="1" fill="#f0f0f0" opacity="0.6"/>
<text x="90" y="236" font-size="11" fill="#111" textLength="46" lengthAdjust="spacingAndGlyphs">ビュー管理</text>
<rect x="58" y="246.5" width="90" height="19" fill="#f0f0f0" opacity="0.93"/>
<path d="M40.2 250H43.1L48.8 256L42.6 262.2H40.2Z" fill="#e4e6ea" stroke="#111" stroke-width="1.2" stroke-linejoin="round"/>
<path d="M61 256Q69 247.5 77 256Q69 264.5 61 256Z" fill="none" stroke="#b0b0b0" stroke-width="1.2"/><circle cx="69" cy="256" r="2.6" fill="none" stroke="#b0b0b0" stroke-width="1.2"/><path d="M63 250L75 262" stroke="#a0a0a0" stroke-width="1"/>
<path d="M86 250H93V251.5H102V262H86Z" fill="#8c8c8c"/><rect x="86" y="252" width="16" height="1" fill="#f0f0f0" opacity="0.6"/>
<text x="115" y="260" font-size="11" fill="#111" textLength="21" lengthAdjust="spacingAndGlyphs">原点</text>
<rect x="58" y="270.5" width="90" height="19" fill="#f0f0f0" opacity="0.93"/>
<path d="M39 285.5L50 274.5V285.5Z" fill="url(#tg)" stroke="#111" stroke-width="1" stroke-linejoin="round"/>
<path d="M61 280Q69 271 77 280Q69 289 61 280Z" fill="#8c8c8c"/><circle cx="69" cy="280" r="2.9" fill="none" stroke="#f0f0f0" stroke-width="1.3"/>
<path d="M86 274H93V275.5H102V286H86Z" fill="#8c8c8c"/><rect x="86" y="276" width="16" height="1" fill="#f0f0f0" opacity="0.6"/>
<text x="115" y="284" font-size="11" fill="#111" textLength="25" lengthAdjust="spacingAndGlyphs">ボディ</text>
<rect x="76" y="294.5" width="111" height="19" fill="#f0f0f0" opacity="0.93"/>
<path d="M57 309.5L68 298.5V309.5Z" fill="url(#tg)" stroke="#111" stroke-width="1" stroke-linejoin="round"/>
<path d="M79 304Q87 295 95 304Q87 313 79 304Z" fill="#8c8c8c"/><circle cx="87" cy="304" r="2.9" fill="none" stroke="#f0f0f0" stroke-width="1.3"/>
<path d="M104 298H111V299.5H120V310H104Z" fill="#8c8c8c"/><rect x="104" y="300" width="16" height="1" fill="#f0f0f0" opacity="0.6"/>
<text x="134" y="308" font-size="11" fill="#111" textLength="43" lengthAdjust="spacingAndGlyphs">FDD (12)</text>
<rect x="94" y="318.5" width="106" height="19" fill="#f0f0f0" opacity="0.93"/>
<path d="M97 328Q105 319 113 328Q105 337 97 328Z" fill="#8c8c8c"/><circle cx="105" cy="328" r="2.9" fill="none" stroke="#f0f0f0" stroke-width="1.3"/>
<rect x="122.7" y="320.7" width="14.6" height="14.6" rx="3.5" fill="#fafbfc" stroke="#3b4350" stroke-width="1.3"/><path d="M126.5 325H136.6V331.8Q136.6 334.6 133.8 334.6H126.5Z" fill="url(#bg1)"/>
<text x="152" y="332" font-size="11" fill="#111" textLength="40" lengthAdjust="spacingAndGlyphs">足・1 (2)</text>
<rect x="94" y="342.5" width="106" height="19" fill="#f0f0f0" opacity="0.93"/>
<path d="M97 352Q105 343 113 352Q105 361 97 352Z" fill="#8c8c8c"/><circle cx="105" cy="352" r="2.9" fill="none" stroke="#f0f0f0" stroke-width="1.3"/>
<rect x="122.7" y="344.7" width="14.6" height="14.6" rx="3.5" fill="#fafbfc" stroke="#3b4350" stroke-width="1.3"/><path d="M126.5 349H136.6V355.8Q136.6 358.6 133.8 358.6H126.5Z" fill="url(#bg1)"/>
<text x="152" y="356" font-size="11" fill="#111" textLength="40" lengthAdjust="spacingAndGlyphs">足・2 (2)</text>
<rect x="94" y="366.5" width="106" height="19" fill="#f0f0f0" opacity="0.93"/>
<path d="M97 376Q105 367 113 376Q105 385 97 376Z" fill="#8c8c8c"/><circle cx="105" cy="376" r="2.9" fill="none" stroke="#f0f0f0" stroke-width="1.3"/>
<rect x="122.7" y="368.7" width="14.6" height="14.6" rx="3.5" fill="#fafbfc" stroke="#3b4350" stroke-width="1.3"/><path d="M126.5 373H136.6V379.8Q136.6 382.6 133.8 382.6H126.5Z" fill="url(#bg1)"/>
<text x="152" y="380" font-size="11" fill="#111" textLength="40" lengthAdjust="spacingAndGlyphs">足・3 (2)</text>
<rect x="94" y="390.5" width="106" height="19" fill="#f0f0f0" opacity="0.93"/>
<path d="M97 400Q105 391 113 400Q105 409 97 400Z" fill="#8c8c8c"/><circle cx="105" cy="400" r="2.9" fill="none" stroke="#f0f0f0" stroke-width="1.3"/>
<rect x="122.7" y="392.7" width="14.6" height="14.6" rx="3.5" fill="#fafbfc" stroke="#3b4350" stroke-width="1.3"/><path d="M126.5 397H136.6V403.8Q136.6 406.6 133.8 406.6H126.5Z" fill="url(#bg1)"/>
<text x="152" y="404" font-size="11" fill="#111" textLength="40" lengthAdjust="spacingAndGlyphs">足・4 (2)</text>
<rect x="94" y="414.5" width="142" height="19" fill="#f0f0f0" opacity="0.93"/>
<path d="M97 424Q105 415 113 424Q105 433 97 424Z" fill="#8c8c8c"/><circle cx="105" cy="424" r="2.9" fill="none" stroke="#f0f0f0" stroke-width="1.3"/>
<rect x="122.7" y="416.7" width="14.6" height="14.6" rx="3.5" fill="#fafbfc" stroke="#3b4350" stroke-width="1.3"/><path d="M126.5 421H136.6V427.8Q136.6 430.6 133.8 430.6H126.5Z" fill="url(#bg1)"/>
<text x="152" y="428" font-size="11" fill="#111" textLength="75.5" lengthAdjust="spacingAndGlyphs">フロントパネル (2)</text>
<rect x="94" y="438.5" width="106" height="19" fill="#f0f0f0" opacity="0.93"/>
<path d="M97 448Q105 439 113 448Q105 457 97 448Z" fill="#8c8c8c"/><circle cx="105" cy="448" r="2.9" fill="none" stroke="#f0f0f0" stroke-width="1.3"/>
<rect x="122.7" y="440.7" width="14.6" height="14.6" rx="3.5" fill="#fafbfc" stroke="#3b4350" stroke-width="1.3"/><path d="M126.5 445H136.6V451.8Q136.6 454.6 133.8 454.6H126.5Z" fill="url(#bg1)"/>
<text x="152" y="452" font-size="11" fill="#111" textLength="37.5" lengthAdjust="spacingAndGlyphs">FDD (1)</text>
<rect x="94" y="462.5" width="142" height="19" fill="#f0f0f0" opacity="0.93"/>
<path d="M97 472Q105 463 113 472Q105 481 97 472Z" fill="#8c8c8c"/><circle cx="105" cy="472" r="2.9" fill="none" stroke="#f0f0f0" stroke-width="1.3"/>
<rect x="122.7" y="464.7" width="14.6" height="14.6" rx="3.5" fill="#fafbfc" stroke="#3b4350" stroke-width="1.3"/><path d="M126.5 469H136.6V475.8Q136.6 478.6 133.8 478.6H126.5Z" fill="url(#bg1)"/>
<text x="152" y="476" font-size="11" fill="#111" textLength="74" lengthAdjust="spacingAndGlyphs">フロントパネル・蓋</text>
<rect x="94" y="486.5" width="114" height="19" fill="#f0f0f0" opacity="0.93"/>
<path d="M97 496Q105 487 113 496Q105 505 97 496Z" fill="#8c8c8c"/><circle cx="105" cy="496" r="2.9" fill="none" stroke="#f0f0f0" stroke-width="1.3"/>
<rect x="122.7" y="488.7" width="14.6" height="14.6" rx="3.5" fill="#fafbfc" stroke="#3b4350" stroke-width="1.3"/><path d="M126.5 493H136.6V499.8Q136.6 502.6 133.8 502.6H126.5Z" fill="url(#bg1)"/>
<text x="152" y="500" font-size="11" fill="#111" textLength="47.5" lengthAdjust="spacingAndGlyphs">FDD/レバー</text>
<rect x="94" y="510.5" width="114" height="19" fill="#f0f0f0" opacity="0.93"/>
<path d="M97 520Q105 511 113 520Q105 529 97 520Z" fill="#8c8c8c"/><circle cx="105" cy="520" r="2.9" fill="none" stroke="#f0f0f0" stroke-width="1.3"/>
<rect x="122.7" y="512.7" width="14.6" height="14.6" rx="3.5" fill="#fafbfc" stroke="#3b4350" stroke-width="1.3"/><path d="M126.5 517H136.6V523.8Q136.6 526.6 133.8 526.6H126.5Z" fill="url(#bg1)"/>
<text x="152" y="524" font-size="11" fill="#111" textLength="45" lengthAdjust="spacingAndGlyphs">FDD・LED</text>
<rect x="94" y="534.5" width="110" height="19" fill="#f0f0f0" opacity="0.93"/>
<path d="M97 544Q105 535 113 544Q105 553 97 544Z" fill="#8c8c8c"/><circle cx="105" cy="544" r="2.9" fill="none" stroke="#f0f0f0" stroke-width="1.3"/>
<rect x="122.7" y="536.7" width="14.6" height="14.6" rx="3.5" fill="#fafbfc" stroke="#3b4350" stroke-width="1.3"/><path d="M126.5 541H136.6V547.8Q136.6 550.6 133.8 550.6H126.5Z" fill="url(#bg1)"/>
<text x="152" y="548" font-size="11" fill="#111" textLength="41" lengthAdjust="spacingAndGlyphs">電源LED</text>
<rect x="94" y="558.5" width="138" height="19" fill="#f0f0f0" opacity="0.93"/>
<path d="M97 568Q105 559 113 568Q105 577 97 568Z" fill="#8c8c8c"/><circle cx="105" cy="568" r="2.9" fill="none" stroke="#f0f0f0" stroke-width="1.3"/>
<rect x="122.7" y="560.7" width="14.6" height="14.6" rx="3.5" fill="#fafbfc" stroke="#3b4350" stroke-width="1.3"/><path d="M126.5 565H136.6V571.8Q136.6 574.6 133.8 574.6H126.5Z" fill="url(#bg1)"/>
<text x="152" y="572" font-size="11" fill="#111" textLength="69" lengthAdjust="spacingAndGlyphs">ボディ・背面 (2)</text>
<rect x="94" y="582.5" width="110" height="19" fill="#f0f0f0" opacity="0.93"/>
<path d="M97 592Q105 583 113 592Q105 601 97 592Z" fill="#8c8c8c"/><circle cx="105" cy="592" r="2.9" fill="none" stroke="#f0f0f0" stroke-width="1.3"/>
<rect x="122.7" y="584.7" width="14.6" height="14.6" rx="3.5" fill="#fafbfc" stroke="#3b4350" stroke-width="1.3"/><path d="M126.5 589H136.6V595.8Q136.6 598.6 133.8 598.6H126.5Z" fill="url(#bg1)"/>
<text x="152" y="596" font-size="11" fill="#111" textLength="41" lengthAdjust="spacingAndGlyphs">ボディ (1)</text>
<rect x="58" y="606.5" width="99" height="19" fill="#f0f0f0" opacity="0.93"/>
<path d="M40.2 610H43.1L48.8 616L42.6 622.2H40.2Z" fill="#e4e6ea" stroke="#111" stroke-width="1.2" stroke-linejoin="round"/>
<path d="M61 616Q69 607 77 616Q69 625 61 616Z" fill="#8c8c8c"/><circle cx="69" cy="616" r="2.9" fill="none" stroke="#f0f0f0" stroke-width="1.3"/>
<path d="M86 610H93V611.5H102V622H86Z" fill="#8c8c8c"/><rect x="86" y="612" width="16" height="1" fill="#f0f0f0" opacity="0.6"/>
<text x="114.5" y="620" font-size="11" fill="#111" textLength="31.5" lengthAdjust="spacingAndGlyphs">スケッチ</text>
<rect x="58" y="630.5" width="139" height="19" fill="#f0f0f0" opacity="0.93"/>
<path d="M40.2 634H43.1L48.8 640L42.6 646.2H40.2Z" fill="#e4e6ea" stroke="#111" stroke-width="1.2" stroke-linejoin="round"/>
<path d="M61 640Q69 631 77 640Q69 649 61 640Z" fill="#8c8c8c"/><circle cx="69" cy="640" r="2.9" fill="none" stroke="#f0f0f0" stroke-width="1.3"/>
<path d="M86 634H93V635.5H102V646H86Z" fill="#8c8c8c"/><rect x="86" y="636" width="16" height="1" fill="#f0f0f0" opacity="0.6"/>
<text x="114.5" y="644" font-size="11" fill="#111" textLength="71.5" lengthAdjust="spacingAndGlyphs">コンストラクション</text>
<rect x="58" y="654.5" width="105" height="19" fill="#f0f0f0" opacity="0.93"/>
<path d="M61 667H71L73 665V668.5L71 670.5H61Z" fill="#c4c4c4"/><path d="M61 657L63 655H73V665L71 667H61Z" fill="#68aee6"/><path d="M61 657L63 655H73L71 657Z" fill="#91cffa"/><path d="M71 657L73 655V665L71 667Z" fill="#4a8fd0"/><path d="M75.5 668V658" stroke="#222" stroke-width="1"/><path d="M73.8 659L75.5 655.5L77.2 659Z" fill="#222"/>
<text x="91" y="668" font-size="11" fill="#111" textLength="62" lengthAdjust="spacingAndGlyphs">押し出し5028</text>
<rect x="58" y="678.5" width="89" height="19" fill="#f0f0f0" opacity="0.93"/>
<path d="M61.5 694.5V686L66 681.5H69L70 694.5Z" fill="#dcdcdc" stroke="#444" stroke-width="1"/><path d="M66 685L70 681L76 691L71 695Z" fill="#5aa6e0"/><path d="M74 687L72 681.5" stroke="#222" stroke-width="0.9"/><path d="M70.8 683L71.8 680L73.5 682.4Z" fill="#222"/>
<text x="91" y="692" font-size="11" fill="#111" textLength="46" lengthAdjust="spacingAndGlyphs">勾配5029</text>
<rect x="58" y="702.5" width="105" height="19" fill="#f0f0f0" opacity="0.93"/>
<path d="M61 715H71L73 713V716.5L71 718.5H61Z" fill="#c4c4c4"/><path d="M61 705L63 703H73V713L71 715H61Z" fill="#68aee6"/><path d="M61 705L63 703H73L71 705Z" fill="#91cffa"/><path d="M71 705L73 703V713L71 715Z" fill="#4a8fd0"/><path d="M75.5 716V706" stroke="#222" stroke-width="1"/><path d="M73.8 707L75.5 703.5L77.2 707Z" fill="#222"/>
<text x="91" y="716" font-size="11" fill="#111" textLength="62" lengthAdjust="spacingAndGlyphs">押し出し5030</text>
<rect x="58" y="726.5" width="105" height="19" fill="#f0f0f0" opacity="0.93"/>
<path d="M61 739H71L73 737V740.5L71 742.5H61Z" fill="#c4c4c4"/><path d="M61 729L63 727H73V737L71 739H61Z" fill="#68aee6"/><path d="M61 729L63 727H73L71 729Z" fill="#91cffa"/><path d="M71 729L73 727V737L71 739Z" fill="#4a8fd0"/><path d="M75.5 740V730" stroke="#222" stroke-width="1"/><path d="M73.8 731L75.5 727.5L77.2 731Z" fill="#222"/>
<text x="91" y="740" font-size="11" fill="#111" textLength="62" lengthAdjust="spacingAndGlyphs">押し出し5031</text>
<rect x="58" y="750.5" width="105" height="19" fill="#f0f0f0" opacity="0.93"/>
<path d="M61 763H71L73 761V764.5L71 766.5H61Z" fill="#c4c4c4"/><path d="M61 753L63 751H73V761L71 763H61Z" fill="#68aee6"/><path d="M61 753L63 751H73L71 753Z" fill="#91cffa"/><path d="M71 753L73 751V761L71 763Z" fill="#4a8fd0"/><path d="M75.5 764V754" stroke="#222" stroke-width="1"/><path d="M73.8 755L75.5 751.5L77.2 755Z" fill="#222"/>
<text x="91" y="764" font-size="11" fill="#111" textLength="62" lengthAdjust="spacingAndGlyphs">押し出し5032</text>
<rect x="58" y="774.5" width="89" height="19" fill="#f0f0f0" opacity="0.93"/>
<path d="M61.5 790.5V782L66 777.5H69L70 790.5Z" fill="#dcdcdc" stroke="#444" stroke-width="1"/><path d="M66 781L70 777L76 787L71 791Z" fill="#5aa6e0"/><path d="M74 783L72 777.5" stroke="#222" stroke-width="0.9"/><path d="M70.8 779L71.8 776L73.5 778.4Z" fill="#222"/>
<text x="91" y="788" font-size="11" fill="#111" textLength="46" lengthAdjust="spacingAndGlyphs">勾配5033</text>
<rect x="58" y="798.5" width="105" height="19" fill="#f0f0f0" opacity="0.93"/>
<path d="M61 811H71L73 809V812.5L71 814.5H61Z" fill="#c4c4c4"/><path d="M61 801L63 799H73V809L71 811H61Z" fill="#68aee6"/><path d="M61 801L63 799H73L71 801Z" fill="#91cffa"/><path d="M71 801L73 799V809L71 811Z" fill="#4a8fd0"/><path d="M75.5 812V802" stroke="#222" stroke-width="1"/><path d="M73.8 803L75.5 799.5L77.2 803Z" fill="#222"/>
<text x="91" y="812" font-size="11" fill="#111" textLength="62" lengthAdjust="spacingAndGlyphs">押し出し5034</text>
<rect x="58" y="822.5" width="105" height="19" fill="#f0f0f0" opacity="0.93"/>
<path d="M61 835H71L73 833V836.5L71 838.5H61Z" fill="#c4c4c4"/><path d="M61 825L63 823H73V833L71 835H61Z" fill="#68aee6"/><path d="M61 825L63 823H73L71 825Z" fill="#91cffa"/><path d="M71 825L73 823V833L71 835Z" fill="#4a8fd0"/><path d="M75.5 836V826" stroke="#222" stroke-width="1"/><path d="M73.8 827L75.5 823.5L77.2 827Z" fill="#222"/>
<text x="91" y="836" font-size="11" fill="#111" textLength="62" lengthAdjust="spacingAndGlyphs">押し出し5035</text>
<rect x="58" y="846.5" width="105" height="19" fill="#f0f0f0" opacity="0.93"/>
<path d="M61 859H71L73 857V860.5L71 862.5H61Z" fill="#c4c4c4"/><path d="M61 849L63 847H73V857L71 859H61Z" fill="#68aee6"/><path d="M61 849L63 847H73L71 849Z" fill="#91cffa"/><path d="M71 849L73 847V857L71 859Z" fill="#4a8fd0"/><path d="M75.5 860V850" stroke="#222" stroke-width="1"/><path d="M73.8 851L75.5 847.5L77.2 851Z" fill="#222"/>
<text x="91" y="860" font-size="11" fill="#111" textLength="62" lengthAdjust="spacingAndGlyphs">押し出し5036</text>
<rect x="58" y="870.5" width="89" height="19" fill="#f0f0f0" opacity="0.93"/>
<path d="M61.5 886.5V878L66 873.5H69L70 886.5Z" fill="#dcdcdc" stroke="#444" stroke-width="1"/><path d="M66 877L70 873L76 883L71 887Z" fill="#5aa6e0"/><path d="M74 879L72 873.5" stroke="#222" stroke-width="0.9"/><path d="M70.8 875L71.8 872L73.5 874.4Z" fill="#222"/>
<text x="91" y="884" font-size="11" fill="#111" textLength="46" lengthAdjust="spacingAndGlyphs">勾配5037</text>
<rect x="58" y="894.5" width="105" height="19" fill="#f0f0f0" opacity="0.93"/>
<path d="M61 907H71L73 905V908.5L71 910.5H61Z" fill="#c4c4c4"/><path d="M61 897L63 895H73V905L71 907H61Z" fill="#68aee6"/><path d="M61 897L63 895H73L71 897Z" fill="#91cffa"/><path d="M71 897L73 895V905L71 907Z" fill="#4a8fd0"/><path d="M75.5 908V898" stroke="#222" stroke-width="1"/><path d="M73.8 899L75.5 895.5L77.2 899Z" fill="#222"/>
<text x="91" y="908" font-size="11" fill="#111" textLength="62" lengthAdjust="spacingAndGlyphs">押し出し5038</text>
<rect x="58" y="918.5" width="105" height="19" fill="#f0f0f0" opacity="0.93"/>
<path d="M61 931H71L73 929V932.5L71 934.5H61Z" fill="#c4c4c4"/><path d="M61 921L63 919H73V929L71 931H61Z" fill="#68aee6"/><path d="M61 921L63 919H73L71 921Z" fill="#91cffa"/><path d="M71 921L73 919V929L71 931Z" fill="#4a8fd0"/><path d="M75.5 932V922" stroke="#222" stroke-width="1"/><path d="M73.8 923L75.5 919.5L77.2 923Z" fill="#222"/>
<text x="91" y="932" font-size="11" fill="#111" textLength="62" lengthAdjust="spacingAndGlyphs">押し出し5039</text>
<rect x="58" y="942.5" width="105" height="19" fill="#f0f0f0" opacity="0.93"/>
<path d="M61 955H71L73 953V956.5L71 958.5H61Z" fill="#c4c4c4"/><path d="M61 945L63 943H73V953L71 955H61Z" fill="#68aee6"/><path d="M61 945L63 943H73L71 945Z" fill="#91cffa"/><path d="M71 945L73 943V953L71 955Z" fill="#4a8fd0"/><path d="M75.5 956V946" stroke="#222" stroke-width="1"/><path d="M73.8 947L75.5 943.5L77.2 947Z" fill="#222"/>
<text x="91" y="956" font-size="11" fill="#111" textLength="62" lengthAdjust="spacingAndGlyphs">押し出し5040</text>
<rect x="58" y="966.5" width="89" height="19" fill="#f0f0f0" opacity="0.93"/>
<path d="M61.5 982.5V974L66 969.5H69L70 982.5Z" fill="#dcdcdc" stroke="#444" stroke-width="1"/><path d="M66 973L70 969L76 979L71 983Z" fill="#5aa6e0"/><path d="M74 975L72 969.5" stroke="#222" stroke-width="0.9"/><path d="M70.8 971L71.8 968L73.5 970.4Z" fill="#222"/>
<text x="91" y="980" font-size="11" fill="#111" textLength="46" lengthAdjust="spacingAndGlyphs">勾配5041</text>
<rect x="4.5" y="1010.5" width="299" height="24" fill="#f0f0f0" stroke="#c6c6c6"/>
<text x="28" y="1026" font-size="10" fill="#444" textLength="31" lengthAdjust="spacingAndGlyphs">コメント</text>
<circle cx="287.5" cy="1023" r="4.6" fill="#222"/><path d="M285 1023H290M287.5 1020.5V1025.5" stroke="#fff" stroke-width="1.4"/>
<path d="M299.5 1017V1030M301.5 1017V1030" stroke="#777" stroke-width="0.7"/>
<rect x="841" y="1012" width="237" height="23.5" fill="#f0f0f0" opacity="0.92"/>
<path d="M852.5 1016V1032" stroke="#333" stroke-width="1.2"/><path d="M850.5 1019L852.5 1016L854.5 1019" fill="none" stroke="#333" stroke-width="1"/><ellipse cx="853" cy="1025" rx="7.5" ry="3" fill="none" stroke="#333" stroke-width="1.3"/><path d="M845 1029L848 1026.5V1031.5Z" fill="#333"/>
<path d="M865 1022H871L868 1025.5Z" fill="#333"/>
<rect x="877.5" y="1022.5" width="15" height="9" fill="#f4f4f4" stroke="#555" stroke-width="1"/><rect x="880.5" y="1025" width="9" height="4" fill="#9aa4b0" stroke="#555" stroke-width="0.6"/><path d="M878 1022L880 1017L884 1020L888 1017.5L892 1019V1022" fill="#777"/>
<path d="M906 1031Q903 1026 902.5 1024Q903 1022 905 1024L906 1025V1018Q906.5 1016.5 908 1018V1023V1017Q908.5 1015.5 910.5 1017V1023V1017.5Q911 1016 913 1017.5V1023.5V1019Q913.5 1017.5 915.5 1019V1027Q915 1031 912 1032H908Z" fill="#f4f4f4" stroke="#444" stroke-width="0.9"/>
<circle cx="935" cy="1023" r="4.5" fill="#dce8f0" stroke="#444" stroke-width="1.1"/><path d="M938 1026.5L941.5 1030" stroke="#333" stroke-width="2.2"/><path d="M941 1017H946M943.5 1014.5V1019.5M941 1021H946" stroke="#333" stroke-width="0.9"/>
<rect x="955.5" y="1016.5" width="15" height="15" fill="none" stroke="#444" stroke-width="0.8" stroke-dasharray="1.5 1.2"/><circle cx="962" cy="1022.5" r="5.2" fill="#dce8f0" stroke="#444" stroke-width="1.1"/><path d="M965.5 1026.5L969.5 1030.5" stroke="#333" stroke-width="2.2"/>
<path d="M976.5 1022H982.5L979.5 1025.5Z" fill="#333"/>
<rect x="988.5" y="1016.5" width="15" height="12" rx="1" fill="#6c8fc0" stroke="#444" stroke-width="1"/><rect x="990.5" y="1018.5" width="11" height="8" fill="#a9c4e8"/><path d="M993 1031H999L998 1029H994Z" fill="#777"/>
<path d="M1007 1022H1013L1010 1025.5Z" fill="#333"/>
<rect x="1019" y="1016" width="16" height="16" fill="#5a5a5a"/>
<rect x="1020" y="1017" width="2" height="2" fill="#e4e4e4"/>
<rect x="1020" y="1020" width="2" height="2" fill="#e4e4e4"/>
<rect x="1020" y="1023" width="2" height="2" fill="#e4e4e4"/>
<rect x="1020" y="1026" width="2" height="2" fill="#e4e4e4"/>
<rect x="1020" y="1029" width="2" height="2" fill="#e4e4e4"/>
<rect x="1023" y="1017" width="2" height="2" fill="#e4e4e4"/>
<rect x="1023" y="1020" width="2" height="2" fill="#e4e4e4"/>
<rect x="1023" y="1023" width="2" height="2" fill="#e4e4e4"/>
<rect x="1023" y="1026" width="2" height="2" fill="#e4e4e4"/>
<rect x="1023" y="1029" width="2" height="2" fill="#e4e4e4"/>
<rect x="1026" y="1017" width="2" height="2" fill="#e4e4e4"/>
<rect x="1026" y="1020" width="2" height="2" fill="#e4e4e4"/>
<rect x="1026" y="1023" width="2" height="2" fill="#e4e4e4"/>
<rect x="1026" y="1026" width="2" height="2" fill="#e4e4e4"/>
<rect x="1026" y="1029" width="2" height="2" fill="#e4e4e4"/>
<rect x="1029" y="1017" width="2" height="2" fill="#e4e4e4"/>
<rect x="1029" y="1020" width="2" height="2" fill="#e4e4e4"/>
<rect x="1029" y="1023" width="2" height="2" fill="#e4e4e4"/>
<rect x="1029" y="1026" width="2" height="2" fill="#e4e4e4"/>
<rect x="1029" y="1029" width="2" height="2" fill="#e4e4e4"/>
<rect x="1032" y="1017" width="2" height="2" fill="#e4e4e4"/>
<rect x="1032" y="1020" width="2" height="2" fill="#e4e4e4"/>
<rect x="1032" y="1023" width="2" height="2" fill="#e4e4e4"/>
<rect x="1032" y="1026" width="2" height="2" fill="#e4e4e4"/>
<rect x="1032" y="1029" width="2" height="2" fill="#e4e4e4"/>
<path d="M1037.5 1022H1043.5L1040.5 1025.5Z" fill="#333"/>
<rect x="1050" y="1017" width="15" height="14" rx="1" fill="#3a5a9a"/><rect x="1051.5" y="1018.5" width="5.3" height="4.7" fill="#9ec0ea"/><rect x="1058.2" y="1018.5" width="5.3" height="4.7" fill="#9ec0ea"/><rect x="1051.5" y="1024.8" width="5.3" height="4.7" fill="#9ec0ea"/><rect x="1058.2" y="1024.8" width="5.3" height="4.7" fill="#9ec0ea"/>
<path d="M1068 1022H1074L1071 1025.5Z" fill="#333"/>
<rect x="0" y="0" width="1920" height="23" fill="#fff"/>
<rect x="1920" y="0" width="8" height="33" rx="4" fill="#ececec"/>
<rect x="1920" y="70" width="8" height="1" fill="#d0d0d0"/>
<rect x="3" y="3" width="14" height="16" rx="2" fill="#e86a1f"/><rect x="3" y="15" width="14" height="4" fill="#b8461a"/>
<text x="10" y="13" font-size="9" font-weight="bold" fill="#fff" text-anchor="middle">F</text>
<text x="23" y="15.2" font-size="12" fill="#111" textLength="237" lengthAdjust="spacingAndGlyphs">Autodesk Fusion 360 (個人用 - 商用利用不可)</text>
<rect x="1799" y="10" width="11" height="1" fill="#111"/>
<rect x="1843.5" y="7.5" width="8" height="8" fill="none" stroke="#111"/><path d="M1845.5 5.5H1853.5V13.5" fill="none" stroke="#111"/>
<path d="M1890 5L1901 16M1901 5L1890 16" stroke="#111" stroke-width="1.1"/>
<rect x="0" y="23" width="1918" height="32" fill="#cacaca"/>
<path d="M193 55V32Q193 27 198 27H1664Q1669 27 1669 32V55Z" fill="#f2f2f2"/>
<rect x="1918" y="23" width="2" height="114" fill="#f1f1f1"/>
<rect x="9" y="32" width="4" height="4" rx="0.6" fill="#666"/>
<rect x="9" y="37" width="4" height="4" rx="0.6" fill="#666"/>
<rect x="9" y="42" width="4" height="4" rx="0.6" fill="#666"/>
<rect x="14" y="32" width="4" height="4" rx="0.6" fill="#666"/>
<rect x="14" y="37" width="4" height="4" rx="0.6" fill="#666"/>
<rect x="14" y="42" width="4" height="4" rx="0.6" fill="#666"/>
<rect x="19" y="32" width="4" height="4" rx="0.6" fill="#666"/>
<rect x="19" y="37" width="4" height="4" rx="0.6" fill="#666"/>
<rect x="19" y="42" width="4" height="4" rx="0.6" fill="#666"/>
<path d="M42 31H51L55 35V47H42Z" fill="#666"/><path d="M51 31V35H55" fill="#ccc"/>
<path d="M61 37H68L64.5 41Z" fill="#666"/>
<path d="M87 32H101V46H89L87 44Z" fill="#666"/><rect x="90" y="33" width="8" height="4" fill="#c9c9c9"/><rect x="91" y="34" width="6" height="2" fill="#666"/><rect x="90" y="41" width="8" height="5" fill="#c9c9c9"/><rect x="92" y="42.5" width="4" height="3.5" fill="#666"/>
<path d="M132.5 45Q132 38 124 38.5" fill="none" stroke="#666" stroke-width="1.8"/><path d="M125.5 34L120.5 38.7L125.5 43" fill="none" stroke="#666" stroke-width="1.8"/>
<path d="M140 37H147L143.5 41Z" fill="#666"/>
<path d="M160.5 45Q161 38 169 38.5" fill="none" stroke="#999" stroke-width="1.8"/><path d="M167.5 34L172.5 38.7L167.5 43" fill="none" stroke="#999" stroke-width="1.8"/>
<path d="M179 37H186L182.5 41Z" fill="#999"/>
<path d="M891 33L898 37V45L891 49L884 45V37Z" fill="#ff7a1a"/><path d="M884 37L891 41L898 37L891 33Z" fill="#ffb888"/><path d="M891 41V49L898 45V37Z" fill="#f06000"/>
<text x="904" y="46" font-size="12" fill="#3c3c3c">JR-F01 v2*</text>
<path d="M1653.5 37.5L1661 45M1661 37.5L1653.5 45" stroke="#555" stroke-width="1.2"/>
<path d="M1673 55V31Q1673 27 1677 27H1697Q1701 27 1701 31V55Z" fill="#bdbdbd"/>
<path d="M1687 35V45M1682 40H1692" stroke="#6a6a6a" stroke-width="2"/>
<path d="M1713 31H1721L1725 35V47H1713Z" fill="#666"/><path d="M1717 45L1726 36L1728 38L1719 47H1717Z" fill="#666" stroke="#c9c9c9" stroke-width="0.8"/>
<text x="1732" y="43.5" font-size="11" fill="#333">9/10</text>
<circle cx="1786" cy="39" r="7.3" fill="none" stroke="#666" stroke-width="1.6"/><circle cx="1786" cy="39" r="5.3" fill="none" stroke="#666" stroke-width="0.8"/><path d="M1786 35V39.5H1789" fill="none" stroke="#666" stroke-width="1.4"/>
<path d="M1813 44Q1815 42 1815 37Q1815 33 1819 32.5Q1823 33 1823 37Q1823 42 1825 44Z" fill="#666"/><circle cx="1819" cy="45.5" r="1.6" fill="#666"/><circle cx="1823.5" cy="34.5" r="2.5" fill="#0d96e0" stroke="#c9c9c9" stroke-width="0.8"/>
<circle cx="1852" cy="39" r="8" fill="#666"/><text x="1852" y="43.5" font-size="13" font-weight="bold" fill="#fff" text-anchor="middle">?</text>
<defs><linearGradient id="av" x1="0" y1="0" x2="0" y2="1"><stop offset="0" stop-color="#6c7e98"/><stop offset="1" stop-color="#a9bcd6"/></linearGradient></defs>
<circle cx="1893" cy="39" r="12" fill="url(#av)"/><path d="M1884 49Q1886 44 1890 43Q1887 40 1887 36Q1888 30 1893 30Q1898 30 1899 36Q1899 40 1896 43Q1900 44 1902 49Q1898 51 1893 51Q1888 51 1884 49Z" fill="#4f5e75"/>
<rect x="0" y="55" width="1918" height="81" fill="#f2f2f2"/>
<rect x="0" y="136" width="1918" height="1" fill="#dcdcdc"/><rect x="0" y="137" width="1920" height="2.5" fill="#f2f2f2"/>
<rect x="12" y="66" width="109" height="60" rx="4" fill="#f2f2f2" stroke="#dadada" stroke-width="1.2"/>
<text x="41.8" y="99" font-size="11" font-weight="bold" fill="#222" textLength="37" lengthAdjust="spacingAndGlyphs">デザイン</text><path d="M84.8 94H91L87.9 97.6Z" fill="#333"/>
<text x="150" y="70" font-size="10" fill="#0696d7" textLength="32" lengthAdjust="spacingAndGlyphs" font-weight="bold">ソリッド</text>
<text x="228" y="70" font-size="10" fill="#222" textLength="39" lengthAdjust="spacingAndGlyphs">サーフェス</text>
<text x="315" y="70" font-size="10" fill="#222" textLength="29" lengthAdjust="spacingAndGlyphs">メッシュ</text>
<text x="388" y="70" font-size="10" fill="#222" textLength="32" lengthAdjust="spacingAndGlyphs">フォーム</text>
<text x="466" y="70" font-size="10" fill="#222" textLength="53" lengthAdjust="spacingAndGlyphs">シート メタル</text>
<text x="565" y="70" font-size="10" fill="#222" textLength="45" lengthAdjust="spacingAndGlyphs">プラスチック</text>
<text x="658" y="70" font-size="10" fill="#222" textLength="51" lengthAdjust="spacingAndGlyphs">ユーティリティ</text>
<rect x="138" y="77" width="56" height="3" rx="1.5" fill="#0696d7"/>
<rect x="351" y="81" width="1" height="51" fill="#d8d8d8"/>
<rect x="620" y="81" width="1" height="51" fill="#d8d8d8"/>
<rect x="717" y="81" width="1" height="51" fill="#d8d8d8"/>
<rect x="776" y="81" width="1" height="51" fill="#d8d8d8"/>
<rect x="835" y="81" width="1" height="51" fill="#d8d8d8"/>
<rect x="894" y="81" width="1" height="51" fill="#d8d8d8"/>
<text x="220" y="130.5" font-size="10" fill="#1c1c1c" textLength="20.0" lengthAdjust="spacingAndGlyphs">作成</text><path d="M244.7 124H250.7L247.7 127.5Z" fill="#333"/>
<text x="468.4" y="130.5" font-size="10" fill="#1c1c1c" textLength="19.6" lengthAdjust="spacingAndGlyphs">修正</text><path d="M492.3 124H498.3L495.3 127.5Z" fill="#333"/>
<text x="642.9" y="130.5" font-size="10" fill="#1c1c1c" textLength="38.8" lengthAdjust="spacingAndGlyphs">アセンブリ</text><path d="M685.2 124H691.2L688.2 127.5Z" fill="#333"/>
<text x="731" y="130.5" font-size="10" fill="#1c1c1c" textLength="20.4" lengthAdjust="spacingAndGlyphs">構築</text><path d="M755.8 124H761.8L758.8 127.5Z" fill="#333"/>
<text x="790.2" y="130.5" font-size="10" fill="#1c1c1c" textLength="20.2" lengthAdjust="spacingAndGlyphs">検査</text><path d="M814 124H820L817 127.5Z" fill="#333"/>
<text x="848.9" y="130.5" font-size="10" fill="#1c1c1c" textLength="20.6" lengthAdjust="spacingAndGlyphs">挿入</text><path d="M873 124H879L876 127.5Z" fill="#333"/>
<text x="907.8" y="130.5" font-size="10" fill="#1c1c1c" textLength="19.9" lengthAdjust="spacingAndGlyphs">選択</text><path d="M932.1 124H938.1L935.1 127.5Z" fill="#333"/>
<rect x="138.5" y="83.5" width="28" height="29" fill="none" stroke="#555" stroke-width="0.9"/>
<rect x="137" y="82" width="3" height="3" fill="#555"/>
<rect x="165" y="82" width="3" height="3" fill="#555"/>
<rect x="137" y="111" width="3" height="3" fill="#555"/>
<path d="M145.5 90.5H158.5M145.5 90.5V103.5M158.5 90.5Q158 102 145.5 103.5" fill="none" stroke="#555" stroke-width="0.9"/>
<rect x="144.5" y="89.5" width="2.5" height="2.5" fill="#555"/><rect x="157" y="89.5" width="2.5" height="2.5" fill="#555"/><rect x="144.5" y="102" width="2.5" height="2.5" fill="#555"/>
<path d="M162 100V114M155 107H169" stroke="#1ea03c" stroke-width="3.2"/>
<path d="M181 110H204L209 105V113L204 114H181Z" fill="#b9b9b9"/><rect x="181" y="109" width="23" height="5" fill="#c4c4c4"/><path d="M204 109L209 104V109.5L204 114Z" fill="#a9a9a9"/>
<path d="M181 87L186 82H205L205 104L204 109H181Z" fill="#66afe9"/><path d="M181 87L186 82H205L200 87Z" fill="#8fd0fb"/><path d="M200 87L205 82V104L200 109Z" fill="#4a90d0"/>
<path d="M208.5 108V84" stroke="#222" stroke-width="1"/><path d="M206 87L208.5 83L211 87Z" fill="#222"/>
<path d="M225 87Q238 78 252 89" fill="none" stroke="#333" stroke-width="0.9"/><path d="M223 89L228 84.5L229 89Z" fill="#333"/>
<path d="M223 98Q238 87 250 96L250 104Q238 97 227 111L223 106Z" fill="#66afe9"/><path d="M223 98Q238 87 250 96L255 98Q240 88 227 95Z" fill="#8fd0fb"/><path d="M250 96L255 93V102L250 107Z" fill="#fff" stroke="#333" stroke-width="0.8"/><path d="M223 98V106L227 111V102Z" fill="#4a90d0"/>
<path d="M266 87L271 82H298V109L293 114H266Z" fill="#d9d9d9" stroke="#555" stroke-width="0.8"/><path d="M293 87L298 82V109L293 114Z" fill="#b9b9b9"/><path d="M266 87L271 82H298L293 87Z" fill="#f0f0f0"/><path d="M266 87H293V114" fill="none" stroke="#555" stroke-width="0.6"/>
<circle cx="279.5" cy="100" r="7.5" fill="#fff" stroke="#555" stroke-width="0.9"/><circle cx="279.5" cy="100" r="5.5" fill="#66afe9"/><path d="M276 94.5Q280 101 285 98Q285 94 280 94Z" fill="#fff"/>
<path d="M313 88H331M312 88V106M313 106H331" stroke="#555" stroke-width="0.9"/><rect x="309.5" y="84.5" width="6" height="6" fill="#fff" stroke="#555" stroke-width="0.9"/><rect x="330" y="84" width="7" height="7" fill="#66afe9"/><rect x="309" y="104" width="7" height="7" fill="#66afe9"/><rect x="330" y="104" width="7" height="7" fill="#66afe9"/>
<path d="M364 87L367 82H375V114H364Z" fill="#f0f0f0" stroke="#555" stroke-width="0.8"/><path d="M371 87L375 82H386V109L381 114H371Z" fill="#66afe9"/><path d="M381 87L386 82V109L381 114Z" fill="#4a90d0"/>
<path d="M383.5 97.5H391" stroke="#222" stroke-width="1"/><path d="M389.5 95L393.5 97.5L389.5 100Z" fill="#222"/>
<path d="M406 88L412 82H423Q438 84 438 100V109L433 114H406Z" fill="#d9d9d9" stroke="#555" stroke-width="0.8"/><path d="M433 104L438 99V109L433 114Z" fill="#b9b9b9"/><path d="M419 85Q424 82 428 83Q438 87 438 98L433 102Q432 92 423 88Z" fill="#66afe9"/>
<path d="M449 87L455 82H481V109L475 114H449Z" fill="#d9d9d9" stroke="#555" stroke-width="0.8"/><path d="M475 87L481 82V109L475 114Z" fill="#b9b9b9"/><path d="M449 87L455 82H481L475 87Z" fill="#f0f0f0"/><rect x="453" y="91" width="18" height="18" fill="#f5f5f5" stroke="#aaa" stroke-width="0.6"/><path d="M454 93H459V103H469V108H454Z" fill="#4a90d0"/><path d="M459 103H469V108H454Z" fill="#8fd0fb"/>
<path d="M492 97L497 92H503V114H492Z" fill="#66afe9"/><path d="M505 87L510 82H524V104L519 109H514V114H492V97H505Z" fill="#66afe9"/><path d="M505 87L510 82H524L519 87Z" fill="#8fd0fb"/><path d="M519 87L524 82V104L519 109Z" fill="#4a90d0"/><path d="M492 97L497 92H505V97Z" fill="#8fd0fb"/><path d="M514 109L519 104V109L514 114Z" fill="#4a90d0"/>
<path d="M537 87L542 82H565V95L560 100H537Z" fill="#66afe9"/><path d="M537 87L542 82H565L560 87Z" fill="#8fd0fb"/><path d="M560 87L565 82V95L560 100Z" fill="#4a90d0"/>
<path d="M537 104H560L565 99V108L560 113H537Z" fill="#d9d9d9" stroke="#555" stroke-width="0.7"/><path d="M560 104L565 99V108L560 113Z" fill="#b9b9b9"/>
<path d="M535 100.5H560L567 93.5" fill="none" stroke="#1e88e5" stroke-width="0.9"/><path d="M535 102.5H560L567 95.5" fill="none" stroke="#fff" stroke-width="0.9"/>
<path d="M593.5 86V112M580 99H607" stroke="#222" stroke-width="1.8"/><path d="M593.5 82L597.5 88H589.5Z M593.5 113L597.5 107H589.5Z M578 99L584 95V103Z M609 99L603 95V103Z" fill="#222"/>
<rect x="632" y="98" width="12" height="15" fill="#d9d9d9" stroke="#555" stroke-width="0.7"/><path d="M644 98L648 95H660L656 98Z" fill="#f0f0f0" stroke="#555" stroke-width="0.7"/><rect x="644" y="98" width="12" height="15" fill="#d9d9d9" stroke="#555" stroke-width="0.7"/><path d="M656 98L660 95V110L656 113Z" fill="#b9b9b9" stroke="#555" stroke-width="0.7"/>
<path d="M632 88L636 85H648V98H632Z" fill="#66afe9"/><path d="M632 88L636 85H648L644 88Z" fill="#8fd0fb"/><path d="M644 88L648 85V96L644 98Z" fill="#4a90d0"/>
<path d="M656 83L657.5 88L662.5 86L659.5 90.5L663.5 93L658.5 93.5L659 98.5L656 95L653 98.5L653.5 93.5L648.5 93L652.5 90.5L649.5 86L654.5 88Z" fill="#f5a623"/>
<path d="M677 112L677 90Q677 86 681 85L686 84Q689 85 689 88V100L684 104V113Z" fill="#d9d9d9" stroke="#555" stroke-width="0.7"/><path d="M693 94L701 88L706 95V113L698 107V100L693 103Z" fill="#d9d9d9" stroke="#555" stroke-width="0.7"/><path d="M686 98V104M697 88V94" stroke="#1e88e5" stroke-width="0.9"/>
<path d="M732 90L739 82V112H732Z" fill="#d9d9d9" stroke="#555" stroke-width="0.7"/><path d="M739 82L750 82V104L739 113Z" fill="#52c07a"/><path d="M752 92L762 82V102L752 112Z" fill="#e0946a"/>
<path d="M793 94H819" stroke="#444" stroke-width="0.8"/><path d="M792.5 90V98M819.5 90V98" stroke="#444" stroke-width="0.8"/><path d="M793 94L796.5 92V96Z M819 94L815.5 92V96Z" fill="#444"/>
<rect x="792" y="101" width="28" height="5" fill="#f0a000"/><path d="M795 101V103M798 101V102.5M801 101V103M804 101V102.5M807 101V103M810 101V102.5M813 101V103M816 101V102.5" stroke="#8a5a00" stroke-width="0.5"/>
<rect x="850" y="83" width="29" height="29" fill="#7ec3f5"/><path d="M850 101Q856 91 861 96Q866 101 870 98Q875 95 879 101V112H850Z" fill="#3c8fcf"/><circle cx="871" cy="90" r="3" fill="#fff6c8"/>
<rect x="905" y="79" width="38" height="38" fill="#0696d7"/><rect x="908.5" y="82.5" width="28" height="21" fill="none" stroke="#8fd64a" stroke-width="1" stroke-dasharray="3 2"/><path d="M929 94L941 104L935.5 104.5L938 111L935.5 112L933 105.5L929 109Z" fill="#fff" stroke="#0696d7" stroke-width="0.5"/>
<rect x="0" y="1040" width="1920" height="8" fill="#111"/><rect x="637" y="1040" width="48" height="8" fill="#333"/><text x="1875" y="1056" font-size="12" fill="#fff">0:15</text>
</svg>
</body></html>
